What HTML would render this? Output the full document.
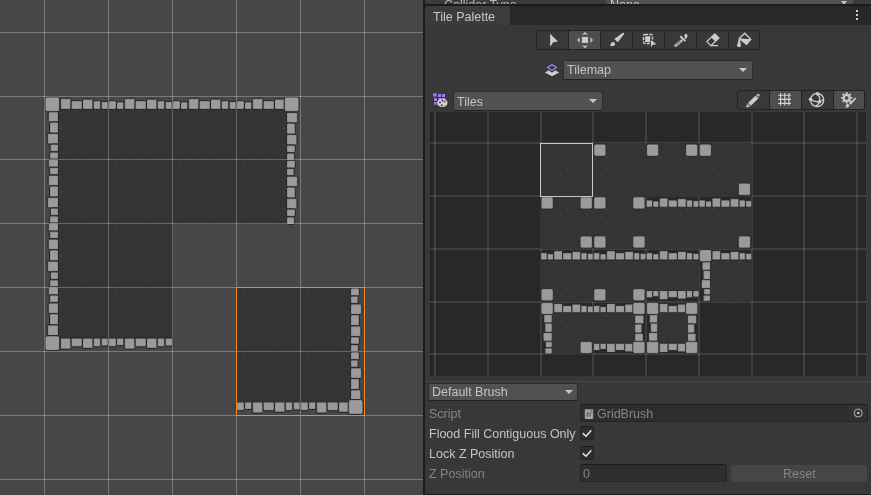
<!DOCTYPE html>
<html><head><meta charset="utf-8">
<style>
*{box-sizing:border-box;margin:0;padding:0}
html,body{-webkit-font-smoothing:antialiased;width:871px;height:495px;overflow:hidden;background:#383838;font-family:"Liberation Sans",sans-serif;font-size:12.5px;color:#c4c4c4}
.a{position:absolute}
.t{position:absolute;white-space:nowrap;line-height:14px;will-change:transform}
.dd{position:absolute;background:#515151;border:1px solid #2e2e2e;border-bottom-color:#222;border-radius:3px}
.dd .arr{position:absolute;width:0;height:0;border-left:4px solid transparent;border-right:4px solid transparent;border-top:4.5px solid #c8c8c8}
.grp{position:absolute;background:#232323;border-radius:3px}
.btn{position:absolute;background:#393939}
.btn.on{background:#4e4e4e}
.fld{position:absolute;background:#2e2e2e;border:1px solid #242424;border-top-color:#1c1c1c;border-radius:3px}
.dis{color:#858585}
.pl{mix-blend-mode:screen}
.sg{fill:#454545}
.pg{fill:#1b1b1b}
@supports (mix-blend-mode:plus-lighter){.pl{mix-blend-mode:plus-lighter}.sg{fill:#323232}.pg{fill:#171717}}
</style></head><body>
<!-- scene -->
<div class="a" style="left:0;top:0;width:423px;height:495px;background:#474747;overflow:hidden">
<svg width="423" height="495" style="position:absolute;left:0;top:0">
<g><g transform="translate(44.000,96.000) scale(1.00000,0.99781)" shape-rendering="crispEdges"><rect x="11.5" y="11.5" width="53.0" height="53.0" fill="#343434"/><g shape-rendering="auto" stroke="#434343" stroke-width="0.9"><path d="M15.40 16.80h2.4M16.60 15.60v2.4"/><path d="M31.80 15.30h2.4M33.00 14.10v2.4"/><path d="M49.50 16.30h2.4M50.70 15.10v2.4"/><path d="M23.80 23.40h2.4M25.00 22.20v2.4"/><path d="M40.80 23.00h2.4M42.00 21.80v2.4"/><path d="M55.80 22.90h2.4M57.00 21.70v2.4"/><path d="M15.80 32.30h2.4M17.00 31.10v2.4"/><path d="M31.80 31.30h2.4M33.00 30.10v2.4"/><path d="M46.70 32.30h2.4M47.90 31.10v2.4"/><path d="M23.40 38.30h2.4M24.60 37.10v2.4"/><path d="M39.50 40.40h2.4M40.70 39.20v2.4"/><path d="M56.40 38.30h2.4M57.60 37.10v2.4"/><path d="M13.70 48.30h2.4M14.90 47.10v2.4"/><path d="M29.50 47.90h2.4M30.70 46.70v2.4"/><path d="M46.90 49.20h2.4M48.10 48.00v2.4"/><path d="M23.40 55.90h2.4M24.60 54.70v2.4"/><path d="M39.50 57.30h2.4M40.70 56.10v2.4"/><path d="M56.60 55.40h2.4M57.80 54.20v2.4"/></g></g><g transform="translate(108.000,96.000) scale(1.00000,0.99781)" shape-rendering="crispEdges"><rect x="-0.5" y="11.5" width="65.0" height="53.0" fill="#343434"/><g shape-rendering="auto" stroke="#434343" stroke-width="0.9"><path d="M15.40 16.80h2.4M16.60 15.60v2.4"/><path d="M31.80 15.30h2.4M33.00 14.10v2.4"/><path d="M49.50 16.30h2.4M50.70 15.10v2.4"/><path d="M8.50 24.20h2.4M9.70 23.00v2.4"/><path d="M23.80 23.40h2.4M25.00 22.20v2.4"/><path d="M40.80 23.00h2.4M42.00 21.80v2.4"/><path d="M55.80 22.90h2.4M57.00 21.70v2.4"/><path d="M15.80 32.30h2.4M17.00 31.10v2.4"/><path d="M31.80 31.30h2.4M33.00 30.10v2.4"/><path d="M46.70 32.30h2.4M47.90 31.10v2.4"/><path d="M7.50 38.80h2.4M8.70 37.60v2.4"/><path d="M23.40 38.30h2.4M24.60 37.10v2.4"/><path d="M39.50 40.40h2.4M40.70 39.20v2.4"/><path d="M56.40 38.30h2.4M57.60 37.10v2.4"/><path d="M13.70 48.30h2.4M14.90 47.10v2.4"/><path d="M29.50 47.90h2.4M30.70 46.70v2.4"/><path d="M46.90 49.20h2.4M48.10 48.00v2.4"/><path d="M7.80 57.30h2.4M9.00 56.10v2.4"/><path d="M23.40 55.90h2.4M24.60 54.70v2.4"/><path d="M39.50 57.30h2.4M40.70 56.10v2.4"/><path d="M56.60 55.40h2.4M57.80 54.20v2.4"/></g></g><g transform="translate(172.000,96.000) scale(1.00000,0.99781)" shape-rendering="crispEdges"><rect x="-0.5" y="11.5" width="65.0" height="53.0" fill="#343434"/><g shape-rendering="auto" stroke="#434343" stroke-width="0.9"><path d="M15.40 16.80h2.4M16.60 15.60v2.4"/><path d="M31.80 15.30h2.4M33.00 14.10v2.4"/><path d="M49.50 16.30h2.4M50.70 15.10v2.4"/><path d="M8.50 24.20h2.4M9.70 23.00v2.4"/><path d="M23.80 23.40h2.4M25.00 22.20v2.4"/><path d="M40.80 23.00h2.4M42.00 21.80v2.4"/><path d="M55.80 22.90h2.4M57.00 21.70v2.4"/><path d="M15.80 32.30h2.4M17.00 31.10v2.4"/><path d="M31.80 31.30h2.4M33.00 30.10v2.4"/><path d="M46.70 32.30h2.4M47.90 31.10v2.4"/><path d="M7.50 38.80h2.4M8.70 37.60v2.4"/><path d="M23.40 38.30h2.4M24.60 37.10v2.4"/><path d="M39.50 40.40h2.4M40.70 39.20v2.4"/><path d="M56.40 38.30h2.4M57.60 37.10v2.4"/><path d="M13.70 48.30h2.4M14.90 47.10v2.4"/><path d="M29.50 47.90h2.4M30.70 46.70v2.4"/><path d="M46.90 49.20h2.4M48.10 48.00v2.4"/><path d="M7.80 57.30h2.4M9.00 56.10v2.4"/><path d="M23.40 55.90h2.4M24.60 54.70v2.4"/><path d="M39.50 57.30h2.4M40.70 56.10v2.4"/><path d="M56.60 55.40h2.4M57.80 54.20v2.4"/></g></g><g transform="translate(236.000,96.000) scale(1.00000,0.99781)" shape-rendering="crispEdges"><rect x="-0.5" y="11.5" width="53.0" height="53.0" fill="#343434"/><g shape-rendering="auto" stroke="#434343" stroke-width="0.9"><path d="M15.40 16.80h2.4M16.60 15.60v2.4"/><path d="M31.80 15.30h2.4M33.00 14.10v2.4"/><path d="M8.50 24.20h2.4M9.70 23.00v2.4"/><path d="M23.80 23.40h2.4M25.00 22.20v2.4"/><path d="M40.80 23.00h2.4M42.00 21.80v2.4"/><path d="M15.80 32.30h2.4M17.00 31.10v2.4"/><path d="M31.80 31.30h2.4M33.00 30.10v2.4"/><path d="M46.70 32.30h2.4M47.90 31.10v2.4"/><path d="M7.50 38.80h2.4M8.70 37.60v2.4"/><path d="M23.40 38.30h2.4M24.60 37.10v2.4"/><path d="M39.50 40.40h2.4M40.70 39.20v2.4"/><path d="M13.70 48.30h2.4M14.90 47.10v2.4"/><path d="M29.50 47.90h2.4M30.70 46.70v2.4"/><path d="M46.90 49.20h2.4M48.10 48.00v2.4"/><path d="M7.80 57.30h2.4M9.00 56.10v2.4"/><path d="M23.40 55.90h2.4M24.60 54.70v2.4"/><path d="M39.50 57.30h2.4M40.70 56.10v2.4"/></g></g><g transform="translate(44.000,159.860) scale(1.00000,0.99781)" shape-rendering="crispEdges"><rect x="11.5" y="-0.5" width="53.0" height="65.0" fill="#343434"/><g shape-rendering="auto" stroke="#434343" stroke-width="0.9"><path d="M22.80 8.40h2.4M24.00 7.20v2.4"/><path d="M39.50 7.80h2.4M40.70 6.60v2.4"/><path d="M55.80 6.70h2.4M57.00 5.50v2.4"/><path d="M15.40 16.80h2.4M16.60 15.60v2.4"/><path d="M31.80 15.30h2.4M33.00 14.10v2.4"/><path d="M49.50 16.30h2.4M50.70 15.10v2.4"/><path d="M23.80 23.40h2.4M25.00 22.20v2.4"/><path d="M40.80 23.00h2.4M42.00 21.80v2.4"/><path d="M55.80 22.90h2.4M57.00 21.70v2.4"/><path d="M15.80 32.30h2.4M17.00 31.10v2.4"/><path d="M31.80 31.30h2.4M33.00 30.10v2.4"/><path d="M46.70 32.30h2.4M47.90 31.10v2.4"/><path d="M23.40 38.30h2.4M24.60 37.10v2.4"/><path d="M39.50 40.40h2.4M40.70 39.20v2.4"/><path d="M56.40 38.30h2.4M57.60 37.10v2.4"/><path d="M13.70 48.30h2.4M14.90 47.10v2.4"/><path d="M29.50 47.90h2.4M30.70 46.70v2.4"/><path d="M46.90 49.20h2.4M48.10 48.00v2.4"/><path d="M23.40 55.90h2.4M24.60 54.70v2.4"/><path d="M39.50 57.30h2.4M40.70 56.10v2.4"/><path d="M56.60 55.40h2.4M57.80 54.20v2.4"/></g></g><g transform="translate(108.000,159.860) scale(1.00000,0.99781)" shape-rendering="crispEdges"><rect x="-0.5" y="-0.5" width="65.0" height="65.0" fill="#343434"/><g shape-rendering="auto" stroke="#434343" stroke-width="0.9"><path d="M6.80 6.70h2.4M8.00 5.50v2.4"/><path d="M22.80 8.40h2.4M24.00 7.20v2.4"/><path d="M39.50 7.80h2.4M40.70 6.60v2.4"/><path d="M55.80 6.70h2.4M57.00 5.50v2.4"/><path d="M15.40 16.80h2.4M16.60 15.60v2.4"/><path d="M31.80 15.30h2.4M33.00 14.10v2.4"/><path d="M49.50 16.30h2.4M50.70 15.10v2.4"/><path d="M8.50 24.20h2.4M9.70 23.00v2.4"/><path d="M23.80 23.40h2.4M25.00 22.20v2.4"/><path d="M40.80 23.00h2.4M42.00 21.80v2.4"/><path d="M55.80 22.90h2.4M57.00 21.70v2.4"/><path d="M15.80 32.30h2.4M17.00 31.10v2.4"/><path d="M31.80 31.30h2.4M33.00 30.10v2.4"/><path d="M46.70 32.30h2.4M47.90 31.10v2.4"/><path d="M7.50 38.80h2.4M8.70 37.60v2.4"/><path d="M23.40 38.30h2.4M24.60 37.10v2.4"/><path d="M39.50 40.40h2.4M40.70 39.20v2.4"/><path d="M56.40 38.30h2.4M57.60 37.10v2.4"/><path d="M13.70 48.30h2.4M14.90 47.10v2.4"/><path d="M29.50 47.90h2.4M30.70 46.70v2.4"/><path d="M46.90 49.20h2.4M48.10 48.00v2.4"/><path d="M7.80 57.30h2.4M9.00 56.10v2.4"/><path d="M23.40 55.90h2.4M24.60 54.70v2.4"/><path d="M39.50 57.30h2.4M40.70 56.10v2.4"/><path d="M56.60 55.40h2.4M57.80 54.20v2.4"/></g></g><g transform="translate(172.000,159.860) scale(1.00000,0.99781)" shape-rendering="crispEdges"><rect x="-0.5" y="-0.5" width="65.0" height="65.0" fill="#343434"/><g shape-rendering="auto" stroke="#434343" stroke-width="0.9"><path d="M6.80 6.70h2.4M8.00 5.50v2.4"/><path d="M22.80 8.40h2.4M24.00 7.20v2.4"/><path d="M39.50 7.80h2.4M40.70 6.60v2.4"/><path d="M55.80 6.70h2.4M57.00 5.50v2.4"/><path d="M15.40 16.80h2.4M16.60 15.60v2.4"/><path d="M31.80 15.30h2.4M33.00 14.10v2.4"/><path d="M49.50 16.30h2.4M50.70 15.10v2.4"/><path d="M8.50 24.20h2.4M9.70 23.00v2.4"/><path d="M23.80 23.40h2.4M25.00 22.20v2.4"/><path d="M40.80 23.00h2.4M42.00 21.80v2.4"/><path d="M55.80 22.90h2.4M57.00 21.70v2.4"/><path d="M15.80 32.30h2.4M17.00 31.10v2.4"/><path d="M31.80 31.30h2.4M33.00 30.10v2.4"/><path d="M46.70 32.30h2.4M47.90 31.10v2.4"/><path d="M7.50 38.80h2.4M8.70 37.60v2.4"/><path d="M23.40 38.30h2.4M24.60 37.10v2.4"/><path d="M39.50 40.40h2.4M40.70 39.20v2.4"/><path d="M56.40 38.30h2.4M57.60 37.10v2.4"/><path d="M13.70 48.30h2.4M14.90 47.10v2.4"/><path d="M29.50 47.90h2.4M30.70 46.70v2.4"/><path d="M46.90 49.20h2.4M48.10 48.00v2.4"/><path d="M7.80 57.30h2.4M9.00 56.10v2.4"/><path d="M23.40 55.90h2.4M24.60 54.70v2.4"/><path d="M39.50 57.30h2.4M40.70 56.10v2.4"/><path d="M56.60 55.40h2.4M57.80 54.20v2.4"/></g></g><g transform="translate(236.000,159.860) scale(1.00000,0.99781)" shape-rendering="crispEdges"><rect x="-0.5" y="-0.5" width="53.0" height="65.0" fill="#343434"/><g shape-rendering="auto" stroke="#434343" stroke-width="0.9"><path d="M6.80 6.70h2.4M8.00 5.50v2.4"/><path d="M22.80 8.40h2.4M24.00 7.20v2.4"/><path d="M39.50 7.80h2.4M40.70 6.60v2.4"/><path d="M15.40 16.80h2.4M16.60 15.60v2.4"/><path d="M31.80 15.30h2.4M33.00 14.10v2.4"/><path d="M8.50 24.20h2.4M9.70 23.00v2.4"/><path d="M23.80 23.40h2.4M25.00 22.20v2.4"/><path d="M40.80 23.00h2.4M42.00 21.80v2.4"/><path d="M15.80 32.30h2.4M17.00 31.10v2.4"/><path d="M31.80 31.30h2.4M33.00 30.10v2.4"/><path d="M46.70 32.30h2.4M47.90 31.10v2.4"/><path d="M7.50 38.80h2.4M8.70 37.60v2.4"/><path d="M23.40 38.30h2.4M24.60 37.10v2.4"/><path d="M39.50 40.40h2.4M40.70 39.20v2.4"/><path d="M13.70 48.30h2.4M14.90 47.10v2.4"/><path d="M29.50 47.90h2.4M30.70 46.70v2.4"/><path d="M46.90 49.20h2.4M48.10 48.00v2.4"/><path d="M7.80 57.30h2.4M9.00 56.10v2.4"/><path d="M23.40 55.90h2.4M24.60 54.70v2.4"/><path d="M39.50 57.30h2.4M40.70 56.10v2.4"/></g></g><g transform="translate(44.000,223.720) scale(1.00000,0.99781)" shape-rendering="crispEdges"><rect x="11.5" y="-0.5" width="53.0" height="65.0" fill="#343434"/><g shape-rendering="auto" stroke="#434343" stroke-width="0.9"><path d="M22.80 8.40h2.4M24.00 7.20v2.4"/><path d="M39.50 7.80h2.4M40.70 6.60v2.4"/><path d="M55.80 6.70h2.4M57.00 5.50v2.4"/><path d="M15.40 16.80h2.4M16.60 15.60v2.4"/><path d="M31.80 15.30h2.4M33.00 14.10v2.4"/><path d="M49.50 16.30h2.4M50.70 15.10v2.4"/><path d="M23.80 23.40h2.4M25.00 22.20v2.4"/><path d="M40.80 23.00h2.4M42.00 21.80v2.4"/><path d="M55.80 22.90h2.4M57.00 21.70v2.4"/><path d="M15.80 32.30h2.4M17.00 31.10v2.4"/><path d="M31.80 31.30h2.4M33.00 30.10v2.4"/><path d="M46.70 32.30h2.4M47.90 31.10v2.4"/><path d="M23.40 38.30h2.4M24.60 37.10v2.4"/><path d="M39.50 40.40h2.4M40.70 39.20v2.4"/><path d="M56.40 38.30h2.4M57.60 37.10v2.4"/><path d="M13.70 48.30h2.4M14.90 47.10v2.4"/><path d="M29.50 47.90h2.4M30.70 46.70v2.4"/><path d="M46.90 49.20h2.4M48.10 48.00v2.4"/><path d="M23.40 55.90h2.4M24.60 54.70v2.4"/><path d="M39.50 57.30h2.4M40.70 56.10v2.4"/><path d="M56.60 55.40h2.4M57.80 54.20v2.4"/></g></g><g transform="translate(108.000,223.720) scale(1.00000,0.99781)" shape-rendering="crispEdges"><rect x="-0.5" y="-0.5" width="65.0" height="65.0" fill="#343434"/><g shape-rendering="auto" stroke="#434343" stroke-width="0.9"><path d="M6.80 6.70h2.4M8.00 5.50v2.4"/><path d="M22.80 8.40h2.4M24.00 7.20v2.4"/><path d="M39.50 7.80h2.4M40.70 6.60v2.4"/><path d="M55.80 6.70h2.4M57.00 5.50v2.4"/><path d="M15.40 16.80h2.4M16.60 15.60v2.4"/><path d="M31.80 15.30h2.4M33.00 14.10v2.4"/><path d="M49.50 16.30h2.4M50.70 15.10v2.4"/><path d="M8.50 24.20h2.4M9.70 23.00v2.4"/><path d="M23.80 23.40h2.4M25.00 22.20v2.4"/><path d="M40.80 23.00h2.4M42.00 21.80v2.4"/><path d="M55.80 22.90h2.4M57.00 21.70v2.4"/><path d="M15.80 32.30h2.4M17.00 31.10v2.4"/><path d="M31.80 31.30h2.4M33.00 30.10v2.4"/><path d="M46.70 32.30h2.4M47.90 31.10v2.4"/><path d="M7.50 38.80h2.4M8.70 37.60v2.4"/><path d="M23.40 38.30h2.4M24.60 37.10v2.4"/><path d="M39.50 40.40h2.4M40.70 39.20v2.4"/><path d="M56.40 38.30h2.4M57.60 37.10v2.4"/><path d="M13.70 48.30h2.4M14.90 47.10v2.4"/><path d="M29.50 47.90h2.4M30.70 46.70v2.4"/><path d="M46.90 49.20h2.4M48.10 48.00v2.4"/><path d="M7.80 57.30h2.4M9.00 56.10v2.4"/><path d="M23.40 55.90h2.4M24.60 54.70v2.4"/><path d="M39.50 57.30h2.4M40.70 56.10v2.4"/><path d="M56.60 55.40h2.4M57.80 54.20v2.4"/></g></g><g transform="translate(44.000,287.580) scale(1.00000,0.99781)" shape-rendering="crispEdges"><rect x="11.5" y="-0.5" width="53.0" height="53.0" fill="#343434"/><g shape-rendering="auto" stroke="#434343" stroke-width="0.9"><path d="M22.80 8.40h2.4M24.00 7.20v2.4"/><path d="M39.50 7.80h2.4M40.70 6.60v2.4"/><path d="M55.80 6.70h2.4M57.00 5.50v2.4"/><path d="M15.40 16.80h2.4M16.60 15.60v2.4"/><path d="M31.80 15.30h2.4M33.00 14.10v2.4"/><path d="M49.50 16.30h2.4M50.70 15.10v2.4"/><path d="M23.80 23.40h2.4M25.00 22.20v2.4"/><path d="M40.80 23.00h2.4M42.00 21.80v2.4"/><path d="M55.80 22.90h2.4M57.00 21.70v2.4"/><path d="M15.80 32.30h2.4M17.00 31.10v2.4"/><path d="M31.80 31.30h2.4M33.00 30.10v2.4"/><path d="M46.70 32.30h2.4M47.90 31.10v2.4"/><path d="M23.40 38.30h2.4M24.60 37.10v2.4"/><path d="M39.50 40.40h2.4M40.70 39.20v2.4"/><path d="M56.40 38.30h2.4M57.60 37.10v2.4"/><path d="M13.70 48.30h2.4M14.90 47.10v2.4"/><path d="M29.50 47.90h2.4M30.70 46.70v2.4"/><path d="M46.90 49.20h2.4M48.10 48.00v2.4"/></g></g><g transform="translate(108.000,287.580) scale(1.00000,0.99781)" shape-rendering="crispEdges"><rect x="-0.5" y="-0.5" width="65.0" height="53.0" fill="#343434"/><g shape-rendering="auto" stroke="#434343" stroke-width="0.9"><path d="M6.80 6.70h2.4M8.00 5.50v2.4"/><path d="M22.80 8.40h2.4M24.00 7.20v2.4"/><path d="M39.50 7.80h2.4M40.70 6.60v2.4"/><path d="M55.80 6.70h2.4M57.00 5.50v2.4"/><path d="M15.40 16.80h2.4M16.60 15.60v2.4"/><path d="M31.80 15.30h2.4M33.00 14.10v2.4"/><path d="M49.50 16.30h2.4M50.70 15.10v2.4"/><path d="M8.50 24.20h2.4M9.70 23.00v2.4"/><path d="M23.80 23.40h2.4M25.00 22.20v2.4"/><path d="M40.80 23.00h2.4M42.00 21.80v2.4"/><path d="M55.80 22.90h2.4M57.00 21.70v2.4"/><path d="M15.80 32.30h2.4M17.00 31.10v2.4"/><path d="M31.80 31.30h2.4M33.00 30.10v2.4"/><path d="M46.70 32.30h2.4M47.90 31.10v2.4"/><path d="M7.50 38.80h2.4M8.70 37.60v2.4"/><path d="M23.40 38.30h2.4M24.60 37.10v2.4"/><path d="M39.50 40.40h2.4M40.70 39.20v2.4"/><path d="M56.40 38.30h2.4M57.60 37.10v2.4"/><path d="M13.70 48.30h2.4M14.90 47.10v2.4"/><path d="M29.50 47.90h2.4M30.70 46.70v2.4"/><path d="M46.90 49.20h2.4M48.10 48.00v2.4"/></g></g><g transform="translate(236.000,287.580) scale(1.00000,0.99781)" shape-rendering="crispEdges"><rect x="-0.5" y="-0.5" width="65.0" height="65.0" fill="#343434"/><g shape-rendering="auto" stroke="#434343" stroke-width="0.9"><path d="M6.80 6.70h2.4M8.00 5.50v2.4"/><path d="M22.80 8.40h2.4M24.00 7.20v2.4"/><path d="M39.50 7.80h2.4M40.70 6.60v2.4"/><path d="M55.80 6.70h2.4M57.00 5.50v2.4"/><path d="M15.40 16.80h2.4M16.60 15.60v2.4"/><path d="M31.80 15.30h2.4M33.00 14.10v2.4"/><path d="M49.50 16.30h2.4M50.70 15.10v2.4"/><path d="M8.50 24.20h2.4M9.70 23.00v2.4"/><path d="M23.80 23.40h2.4M25.00 22.20v2.4"/><path d="M40.80 23.00h2.4M42.00 21.80v2.4"/><path d="M55.80 22.90h2.4M57.00 21.70v2.4"/><path d="M15.80 32.30h2.4M17.00 31.10v2.4"/><path d="M31.80 31.30h2.4M33.00 30.10v2.4"/><path d="M46.70 32.30h2.4M47.90 31.10v2.4"/><path d="M7.50 38.80h2.4M8.70 37.60v2.4"/><path d="M23.40 38.30h2.4M24.60 37.10v2.4"/><path d="M39.50 40.40h2.4M40.70 39.20v2.4"/><path d="M56.40 38.30h2.4M57.60 37.10v2.4"/><path d="M13.70 48.30h2.4M14.90 47.10v2.4"/><path d="M29.50 47.90h2.4M30.70 46.70v2.4"/><path d="M46.90 49.20h2.4M48.10 48.00v2.4"/><path d="M7.80 57.30h2.4M9.00 56.10v2.4"/><path d="M23.40 55.90h2.4M24.60 54.70v2.4"/><path d="M39.50 57.30h2.4M40.70 56.10v2.4"/><path d="M56.60 55.40h2.4M57.80 54.20v2.4"/></g></g><g transform="translate(300.000,287.580) scale(1.00000,0.99781)" shape-rendering="crispEdges"><rect x="-0.5" y="-0.5" width="53.0" height="65.0" fill="#343434"/><g shape-rendering="auto" stroke="#434343" stroke-width="0.9"><path d="M6.80 6.70h2.4M8.00 5.50v2.4"/><path d="M22.80 8.40h2.4M24.00 7.20v2.4"/><path d="M39.50 7.80h2.4M40.70 6.60v2.4"/><path d="M15.40 16.80h2.4M16.60 15.60v2.4"/><path d="M31.80 15.30h2.4M33.00 14.10v2.4"/><path d="M8.50 24.20h2.4M9.70 23.00v2.4"/><path d="M23.80 23.40h2.4M25.00 22.20v2.4"/><path d="M40.80 23.00h2.4M42.00 21.80v2.4"/><path d="M15.80 32.30h2.4M17.00 31.10v2.4"/><path d="M31.80 31.30h2.4M33.00 30.10v2.4"/><path d="M46.70 32.30h2.4M47.90 31.10v2.4"/><path d="M7.50 38.80h2.4M8.70 37.60v2.4"/><path d="M23.40 38.30h2.4M24.60 37.10v2.4"/><path d="M39.50 40.40h2.4M40.70 39.20v2.4"/><path d="M13.70 48.30h2.4M14.90 47.10v2.4"/><path d="M29.50 47.90h2.4M30.70 46.70v2.4"/><path d="M46.90 49.20h2.4M48.10 48.00v2.4"/><path d="M7.80 57.30h2.4M9.00 56.10v2.4"/><path d="M23.40 55.90h2.4M24.60 54.70v2.4"/><path d="M39.50 57.30h2.4M40.70 56.10v2.4"/></g></g><g transform="translate(236.000,351.440) scale(1.00000,0.99781)" shape-rendering="crispEdges"><rect x="-0.5" y="-0.5" width="65.0" height="53.0" fill="#343434"/><g shape-rendering="auto" stroke="#434343" stroke-width="0.9"><path d="M6.80 6.70h2.4M8.00 5.50v2.4"/><path d="M22.80 8.40h2.4M24.00 7.20v2.4"/><path d="M39.50 7.80h2.4M40.70 6.60v2.4"/><path d="M55.80 6.70h2.4M57.00 5.50v2.4"/><path d="M15.40 16.80h2.4M16.60 15.60v2.4"/><path d="M31.80 15.30h2.4M33.00 14.10v2.4"/><path d="M49.50 16.30h2.4M50.70 15.10v2.4"/><path d="M8.50 24.20h2.4M9.70 23.00v2.4"/><path d="M23.80 23.40h2.4M25.00 22.20v2.4"/><path d="M40.80 23.00h2.4M42.00 21.80v2.4"/><path d="M55.80 22.90h2.4M57.00 21.70v2.4"/><path d="M15.80 32.30h2.4M17.00 31.10v2.4"/><path d="M31.80 31.30h2.4M33.00 30.10v2.4"/><path d="M46.70 32.30h2.4M47.90 31.10v2.4"/><path d="M7.50 38.80h2.4M8.70 37.60v2.4"/><path d="M23.40 38.30h2.4M24.60 37.10v2.4"/><path d="M39.50 40.40h2.4M40.70 39.20v2.4"/><path d="M56.40 38.30h2.4M57.60 37.10v2.4"/><path d="M13.70 48.30h2.4M14.90 47.10v2.4"/><path d="M29.50 47.90h2.4M30.70 46.70v2.4"/><path d="M46.90 49.20h2.4M48.10 48.00v2.4"/></g></g><g transform="translate(300.000,351.440) scale(1.00000,0.99781)" shape-rendering="crispEdges"><rect x="-0.5" y="-0.5" width="53.0" height="53.0" fill="#343434"/><g shape-rendering="auto" stroke="#434343" stroke-width="0.9"><path d="M6.80 6.70h2.4M8.00 5.50v2.4"/><path d="M22.80 8.40h2.4M24.00 7.20v2.4"/><path d="M39.50 7.80h2.4M40.70 6.60v2.4"/><path d="M15.40 16.80h2.4M16.60 15.60v2.4"/><path d="M31.80 15.30h2.4M33.00 14.10v2.4"/><path d="M8.50 24.20h2.4M9.70 23.00v2.4"/><path d="M23.80 23.40h2.4M25.00 22.20v2.4"/><path d="M40.80 23.00h2.4M42.00 21.80v2.4"/><path d="M15.80 32.30h2.4M17.00 31.10v2.4"/><path d="M31.80 31.30h2.4M33.00 30.10v2.4"/><path d="M46.70 32.30h2.4M47.90 31.10v2.4"/><path d="M7.50 38.80h2.4M8.70 37.60v2.4"/><path d="M23.40 38.30h2.4M24.60 37.10v2.4"/><path d="M39.50 40.40h2.4M40.70 39.20v2.4"/><path d="M13.70 48.30h2.4M14.90 47.10v2.4"/><path d="M29.50 47.90h2.4M30.70 46.70v2.4"/><path d="M46.90 49.20h2.4M48.10 48.00v2.4"/></g></g></g>
<g fill="#9a9a9a" stroke="#262626" stroke-width="1"><g transform="translate(44.000,96.000) scale(1.00000,0.99781)" fill="#8c8c8c" stroke="#252525"><rect x="16.30" y="2.20" width="10.80" height="11.30" rx="1.6" /><rect x="17.60" y="3.50" width="8.20" height="8.70" rx="0.6000000000000001" fill="#9b9b9b" stroke="none"/><rect x="27.10" y="4.60" width="11.30" height="8.90" rx="1.6" /><rect x="28.40" y="5.90" width="8.70" height="6.30" rx="0.6000000000000001" fill="#9b9b9b" stroke="none"/><rect x="38.40" y="3.00" width="10.80" height="10.50" rx="1.6" /><rect x="39.70" y="4.30" width="8.20" height="7.90" rx="0.6000000000000001" fill="#9b9b9b" stroke="none"/><rect x="49.20" y="4.60" width="7.70" height="8.90" rx="1.6" /><rect x="50.50" y="5.90" width="5.10" height="6.30" rx="0.6000000000000001" fill="#9b9b9b" stroke="none"/><rect x="57.10" y="5.40" width="7.60" height="8.10" rx="1.6" /><rect x="58.40" y="6.70" width="5.00" height="5.50" rx="0.6000000000000001" fill="#9b9b9b" stroke="none"/><rect x="4.20" y="15.30" width="10.30" height="10.80" rx="1.6" /><rect x="5.50" y="16.60" width="7.70" height="8.20" rx="0.6000000000000001" fill="#9b9b9b" stroke="none"/><rect x="5.50" y="26.10" width="9.00" height="11.30" rx="1.6" /><rect x="6.80" y="27.40" width="6.40" height="8.70" rx="0.6000000000000001" fill="#9b9b9b" stroke="none"/><rect x="3.30" y="37.40" width="11.20" height="10.80" rx="1.6" /><rect x="4.60" y="38.70" width="8.60" height="8.20" rx="0.6000000000000001" fill="#9b9b9b" stroke="none"/><rect x="6.20" y="48.20" width="8.30" height="7.70" rx="1.6" /><rect x="7.50" y="49.50" width="5.70" height="5.10" rx="0.6000000000000001" fill="#9b9b9b" stroke="none"/><rect x="5.50" y="56.10" width="9.00" height="7.60" rx="1.6" /><rect x="6.80" y="57.40" width="6.40" height="5.00" rx="0.6000000000000001" fill="#9b9b9b" stroke="none"/><rect x="0.80" y="0.80" width="15.00" height="15.00" rx="2.5" /><rect x="2.10" y="2.10" width="12.40" height="12.40" rx="1.5" fill="#9b9b9b" stroke="none"/></g><g transform="translate(108.000,96.000) scale(1.00000,0.99781)" fill="#8c8c8c" stroke="#252525"><rect x="0.30" y="4.60" width="8.20" height="8.90" rx="1.6" /><rect x="1.60" y="5.90" width="5.60" height="6.30" rx="0.6000000000000001" fill="#9b9b9b" stroke="none"/><rect x="8.40" y="5.80" width="7.60" height="7.70" rx="1.6" /><rect x="9.70" y="7.10" width="5.00" height="5.10" rx="0.6000000000000001" fill="#9b9b9b" stroke="none"/><rect x="16.30" y="2.20" width="10.80" height="11.30" rx="1.6" /><rect x="17.60" y="3.50" width="8.20" height="8.70" rx="0.6000000000000001" fill="#9b9b9b" stroke="none"/><rect x="27.10" y="4.60" width="11.30" height="8.90" rx="1.6" /><rect x="28.40" y="5.90" width="8.70" height="6.30" rx="0.6000000000000001" fill="#9b9b9b" stroke="none"/><rect x="38.40" y="3.00" width="10.80" height="10.50" rx="1.6" /><rect x="39.70" y="4.30" width="8.20" height="7.90" rx="0.6000000000000001" fill="#9b9b9b" stroke="none"/><rect x="49.20" y="4.60" width="7.70" height="8.90" rx="1.6" /><rect x="50.50" y="5.90" width="5.10" height="6.30" rx="0.6000000000000001" fill="#9b9b9b" stroke="none"/><rect x="57.10" y="5.40" width="7.60" height="8.10" rx="1.6" /><rect x="58.40" y="6.70" width="5.00" height="5.50" rx="0.6000000000000001" fill="#9b9b9b" stroke="none"/></g><g transform="translate(172.000,96.000) scale(1.00000,0.99781)" fill="#8c8c8c" stroke="#252525"><rect x="0.30" y="4.60" width="8.20" height="8.90" rx="1.6" /><rect x="1.60" y="5.90" width="5.60" height="6.30" rx="0.6000000000000001" fill="#9b9b9b" stroke="none"/><rect x="8.40" y="5.80" width="7.60" height="7.70" rx="1.6" /><rect x="9.70" y="7.10" width="5.00" height="5.10" rx="0.6000000000000001" fill="#9b9b9b" stroke="none"/><rect x="16.30" y="2.20" width="10.80" height="11.30" rx="1.6" /><rect x="17.60" y="3.50" width="8.20" height="8.70" rx="0.6000000000000001" fill="#9b9b9b" stroke="none"/><rect x="27.10" y="4.60" width="11.30" height="8.90" rx="1.6" /><rect x="28.40" y="5.90" width="8.70" height="6.30" rx="0.6000000000000001" fill="#9b9b9b" stroke="none"/><rect x="38.40" y="3.00" width="10.80" height="10.50" rx="1.6" /><rect x="39.70" y="4.30" width="8.20" height="7.90" rx="0.6000000000000001" fill="#9b9b9b" stroke="none"/><rect x="49.20" y="4.60" width="7.70" height="8.90" rx="1.6" /><rect x="50.50" y="5.90" width="5.10" height="6.30" rx="0.6000000000000001" fill="#9b9b9b" stroke="none"/><rect x="57.10" y="5.40" width="7.60" height="8.10" rx="1.6" /><rect x="58.40" y="6.70" width="5.00" height="5.50" rx="0.6000000000000001" fill="#9b9b9b" stroke="none"/></g><g transform="translate(236.000,96.000) scale(1.00000,0.99781)" fill="#8c8c8c" stroke="#252525"><rect x="0.30" y="4.60" width="8.20" height="8.90" rx="1.6" /><rect x="1.60" y="5.90" width="5.60" height="6.30" rx="0.6000000000000001" fill="#9b9b9b" stroke="none"/><rect x="8.40" y="5.80" width="7.60" height="7.70" rx="1.6" /><rect x="9.70" y="7.10" width="5.00" height="5.10" rx="0.6000000000000001" fill="#9b9b9b" stroke="none"/><rect x="16.30" y="2.20" width="10.80" height="11.30" rx="1.6" /><rect x="17.60" y="3.50" width="8.20" height="8.70" rx="0.6000000000000001" fill="#9b9b9b" stroke="none"/><rect x="27.10" y="4.60" width="11.30" height="8.90" rx="1.6" /><rect x="28.40" y="5.90" width="8.70" height="6.30" rx="0.6000000000000001" fill="#9b9b9b" stroke="none"/><rect x="38.40" y="3.00" width="10.80" height="10.50" rx="1.6" /><rect x="39.70" y="4.30" width="8.20" height="7.90" rx="0.6000000000000001" fill="#9b9b9b" stroke="none"/><rect x="50.50" y="16.30" width="11.30" height="10.80" rx="1.6" /><rect x="51.80" y="17.60" width="8.70" height="8.20" rx="0.6000000000000001" fill="#9b9b9b" stroke="none"/><rect x="50.50" y="27.10" width="8.90" height="11.30" rx="1.6" /><rect x="51.80" y="28.40" width="6.30" height="8.70" rx="0.6000000000000001" fill="#9b9b9b" stroke="none"/><rect x="50.50" y="38.40" width="10.50" height="10.80" rx="1.6" /><rect x="51.80" y="39.70" width="7.90" height="8.20" rx="0.6000000000000001" fill="#9b9b9b" stroke="none"/><rect x="50.50" y="49.20" width="8.90" height="7.70" rx="1.6" /><rect x="51.80" y="50.50" width="6.30" height="5.10" rx="0.6000000000000001" fill="#9b9b9b" stroke="none"/><rect x="50.50" y="57.10" width="8.10" height="7.60" rx="1.6" /><rect x="51.80" y="58.40" width="5.50" height="5.00" rx="0.6000000000000001" fill="#9b9b9b" stroke="none"/><rect x="48.20" y="0.80" width="15.00" height="15.00" rx="2.5" /><rect x="49.50" y="2.10" width="12.40" height="12.40" rx="1.5" fill="#9b9b9b" stroke="none"/></g><g transform="translate(44.000,159.860) scale(1.00000,0.99781)" fill="#8c8c8c" stroke="#252525"><rect x="4.20" y="-0.70" width="10.30" height="8.20" rx="1.6" /><rect x="5.50" y="0.60" width="7.70" height="5.60" rx="0.6000000000000001" fill="#9b9b9b" stroke="none"/><rect x="5.50" y="7.40" width="9.00" height="7.60" rx="1.6" /><rect x="6.80" y="8.70" width="6.40" height="5.00" rx="0.6000000000000001" fill="#9b9b9b" stroke="none"/><rect x="4.20" y="15.30" width="10.30" height="10.80" rx="1.6" /><rect x="5.50" y="16.60" width="7.70" height="8.20" rx="0.6000000000000001" fill="#9b9b9b" stroke="none"/><rect x="5.50" y="26.10" width="9.00" height="11.30" rx="1.6" /><rect x="6.80" y="27.40" width="6.40" height="8.70" rx="0.6000000000000001" fill="#9b9b9b" stroke="none"/><rect x="3.30" y="37.40" width="11.20" height="10.80" rx="1.6" /><rect x="4.60" y="38.70" width="8.60" height="8.20" rx="0.6000000000000001" fill="#9b9b9b" stroke="none"/><rect x="6.20" y="48.20" width="8.30" height="7.70" rx="1.6" /><rect x="7.50" y="49.50" width="5.70" height="5.10" rx="0.6000000000000001" fill="#9b9b9b" stroke="none"/><rect x="5.50" y="56.10" width="9.00" height="7.60" rx="1.6" /><rect x="6.80" y="57.40" width="6.40" height="5.00" rx="0.6000000000000001" fill="#9b9b9b" stroke="none"/></g><g transform="translate(108.000,159.860) scale(1.00000,0.99781)" fill="#8c8c8c" stroke="#252525"></g><g transform="translate(172.000,159.860) scale(1.00000,0.99781)" fill="#8c8c8c" stroke="#252525"></g><g transform="translate(236.000,159.860) scale(1.00000,0.99781)" fill="#8c8c8c" stroke="#252525"><rect x="50.50" y="0.30" width="8.90" height="8.20" rx="1.6" /><rect x="51.80" y="1.60" width="6.30" height="5.60" rx="0.6000000000000001" fill="#9b9b9b" stroke="none"/><rect x="50.50" y="8.40" width="7.70" height="7.60" rx="1.6" /><rect x="51.80" y="9.70" width="5.10" height="5.00" rx="0.6000000000000001" fill="#9b9b9b" stroke="none"/><rect x="50.50" y="16.30" width="11.30" height="10.80" rx="1.6" /><rect x="51.80" y="17.60" width="8.70" height="8.20" rx="0.6000000000000001" fill="#9b9b9b" stroke="none"/><rect x="50.50" y="27.10" width="8.90" height="11.30" rx="1.6" /><rect x="51.80" y="28.40" width="6.30" height="8.70" rx="0.6000000000000001" fill="#9b9b9b" stroke="none"/><rect x="50.50" y="38.40" width="10.50" height="10.80" rx="1.6" /><rect x="51.80" y="39.70" width="7.90" height="8.20" rx="0.6000000000000001" fill="#9b9b9b" stroke="none"/><rect x="50.50" y="49.20" width="8.90" height="7.70" rx="1.6" /><rect x="51.80" y="50.50" width="6.30" height="5.10" rx="0.6000000000000001" fill="#9b9b9b" stroke="none"/><rect x="50.50" y="57.10" width="8.10" height="7.60" rx="1.6" /><rect x="51.80" y="58.40" width="5.50" height="5.00" rx="0.6000000000000001" fill="#9b9b9b" stroke="none"/></g><g transform="translate(44.000,223.720) scale(1.00000,0.99781)" fill="#8c8c8c" stroke="#252525"><rect x="4.20" y="-0.70" width="10.30" height="8.20" rx="1.6" /><rect x="5.50" y="0.60" width="7.70" height="5.60" rx="0.6000000000000001" fill="#9b9b9b" stroke="none"/><rect x="5.50" y="7.40" width="9.00" height="7.60" rx="1.6" /><rect x="6.80" y="8.70" width="6.40" height="5.00" rx="0.6000000000000001" fill="#9b9b9b" stroke="none"/><rect x="4.20" y="15.30" width="10.30" height="10.80" rx="1.6" /><rect x="5.50" y="16.60" width="7.70" height="8.20" rx="0.6000000000000001" fill="#9b9b9b" stroke="none"/><rect x="5.50" y="26.10" width="9.00" height="11.30" rx="1.6" /><rect x="6.80" y="27.40" width="6.40" height="8.70" rx="0.6000000000000001" fill="#9b9b9b" stroke="none"/><rect x="3.30" y="37.40" width="11.20" height="10.80" rx="1.6" /><rect x="4.60" y="38.70" width="8.60" height="8.20" rx="0.6000000000000001" fill="#9b9b9b" stroke="none"/><rect x="6.20" y="48.20" width="8.30" height="7.70" rx="1.6" /><rect x="7.50" y="49.50" width="5.70" height="5.10" rx="0.6000000000000001" fill="#9b9b9b" stroke="none"/><rect x="5.50" y="56.10" width="9.00" height="7.60" rx="1.6" /><rect x="6.80" y="57.40" width="6.40" height="5.00" rx="0.6000000000000001" fill="#9b9b9b" stroke="none"/></g><g transform="translate(108.000,223.720) scale(1.00000,0.99781)" fill="#8c8c8c" stroke="#252525"></g><g transform="translate(44.000,287.580) scale(1.00000,0.99781)" fill="#8c8c8c" stroke="#252525"><rect x="16.30" y="50.50" width="10.80" height="11.30" rx="1.6" /><rect x="17.60" y="51.80" width="8.20" height="8.70" rx="0.6000000000000001" fill="#9b9b9b" stroke="none"/><rect x="27.10" y="50.50" width="11.30" height="8.90" rx="1.6" /><rect x="28.40" y="51.80" width="8.70" height="6.30" rx="0.6000000000000001" fill="#9b9b9b" stroke="none"/><rect x="38.40" y="50.50" width="10.80" height="10.50" rx="1.6" /><rect x="39.70" y="51.80" width="8.20" height="7.90" rx="0.6000000000000001" fill="#9b9b9b" stroke="none"/><rect x="49.20" y="50.50" width="7.70" height="8.90" rx="1.6" /><rect x="50.50" y="51.80" width="5.10" height="6.30" rx="0.6000000000000001" fill="#9b9b9b" stroke="none"/><rect x="57.10" y="50.50" width="7.60" height="8.10" rx="1.6" /><rect x="58.40" y="51.80" width="5.00" height="5.50" rx="0.6000000000000001" fill="#9b9b9b" stroke="none"/><rect x="4.20" y="-0.70" width="10.30" height="8.20" rx="1.6" /><rect x="5.50" y="0.60" width="7.70" height="5.60" rx="0.6000000000000001" fill="#9b9b9b" stroke="none"/><rect x="5.50" y="7.40" width="9.00" height="7.60" rx="1.6" /><rect x="6.80" y="8.70" width="6.40" height="5.00" rx="0.6000000000000001" fill="#9b9b9b" stroke="none"/><rect x="4.20" y="15.30" width="10.30" height="10.80" rx="1.6" /><rect x="5.50" y="16.60" width="7.70" height="8.20" rx="0.6000000000000001" fill="#9b9b9b" stroke="none"/><rect x="5.50" y="26.10" width="9.00" height="11.30" rx="1.6" /><rect x="6.80" y="27.40" width="6.40" height="8.70" rx="0.6000000000000001" fill="#9b9b9b" stroke="none"/><rect x="3.30" y="37.40" width="11.20" height="10.80" rx="1.6" /><rect x="4.60" y="38.70" width="8.60" height="8.20" rx="0.6000000000000001" fill="#9b9b9b" stroke="none"/><rect x="0.80" y="48.20" width="15.00" height="15.00" rx="2.5" /><rect x="2.10" y="49.50" width="12.40" height="12.40" rx="1.5" fill="#9b9b9b" stroke="none"/></g><g transform="translate(108.000,287.580) scale(1.00000,0.99781)" fill="#8c8c8c" stroke="#252525"><rect x="0.30" y="50.50" width="8.20" height="8.90" rx="1.6" /><rect x="1.60" y="51.80" width="5.60" height="6.30" rx="0.6000000000000001" fill="#9b9b9b" stroke="none"/><rect x="8.40" y="50.50" width="7.60" height="7.70" rx="1.6" /><rect x="9.70" y="51.80" width="5.00" height="5.10" rx="0.6000000000000001" fill="#9b9b9b" stroke="none"/><rect x="16.30" y="50.50" width="10.80" height="11.30" rx="1.6" /><rect x="17.60" y="51.80" width="8.20" height="8.70" rx="0.6000000000000001" fill="#9b9b9b" stroke="none"/><rect x="27.10" y="50.50" width="11.30" height="8.90" rx="1.6" /><rect x="28.40" y="51.80" width="8.70" height="6.30" rx="0.6000000000000001" fill="#9b9b9b" stroke="none"/><rect x="38.40" y="50.50" width="10.80" height="10.50" rx="1.6" /><rect x="39.70" y="51.80" width="8.20" height="7.90" rx="0.6000000000000001" fill="#9b9b9b" stroke="none"/><rect x="49.20" y="50.50" width="7.70" height="8.90" rx="1.6" /><rect x="50.50" y="51.80" width="5.10" height="6.30" rx="0.6000000000000001" fill="#9b9b9b" stroke="none"/><rect x="57.10" y="50.50" width="7.60" height="8.10" rx="1.6" /><rect x="58.40" y="51.80" width="5.00" height="5.50" rx="0.6000000000000001" fill="#9b9b9b" stroke="none"/></g><g transform="translate(236.000,287.580) scale(1.00000,0.99781)" fill="#8c8c8c" stroke="#252525"></g><g transform="translate(300.000,287.580) scale(1.00000,0.99781)" fill="#8c8c8c" stroke="#252525"><rect x="50.50" y="0.30" width="8.90" height="8.20" rx="1.6" /><rect x="51.80" y="1.60" width="6.30" height="5.60" rx="0.6000000000000001" fill="#9b9b9b" stroke="none"/><rect x="50.50" y="8.40" width="7.70" height="7.60" rx="1.6" /><rect x="51.80" y="9.70" width="5.10" height="5.00" rx="0.6000000000000001" fill="#9b9b9b" stroke="none"/><rect x="50.50" y="16.30" width="11.30" height="10.80" rx="1.6" /><rect x="51.80" y="17.60" width="8.70" height="8.20" rx="0.6000000000000001" fill="#9b9b9b" stroke="none"/><rect x="50.50" y="27.10" width="8.90" height="11.30" rx="1.6" /><rect x="51.80" y="28.40" width="6.30" height="8.70" rx="0.6000000000000001" fill="#9b9b9b" stroke="none"/><rect x="50.50" y="38.40" width="10.50" height="10.80" rx="1.6" /><rect x="51.80" y="39.70" width="7.90" height="8.20" rx="0.6000000000000001" fill="#9b9b9b" stroke="none"/><rect x="50.50" y="49.20" width="8.90" height="7.70" rx="1.6" /><rect x="51.80" y="50.50" width="6.30" height="5.10" rx="0.6000000000000001" fill="#9b9b9b" stroke="none"/><rect x="50.50" y="57.10" width="8.10" height="7.60" rx="1.6" /><rect x="51.80" y="58.40" width="5.50" height="5.00" rx="0.6000000000000001" fill="#9b9b9b" stroke="none"/></g><g transform="translate(236.000,351.440) scale(1.00000,0.99781)" fill="#8c8c8c" stroke="#252525"><rect x="0.30" y="50.50" width="8.20" height="8.90" rx="1.6" /><rect x="1.60" y="51.80" width="5.60" height="6.30" rx="0.6000000000000001" fill="#9b9b9b" stroke="none"/><rect x="8.40" y="50.50" width="7.60" height="7.70" rx="1.6" /><rect x="9.70" y="51.80" width="5.00" height="5.10" rx="0.6000000000000001" fill="#9b9b9b" stroke="none"/><rect x="16.30" y="50.50" width="10.80" height="11.30" rx="1.6" /><rect x="17.60" y="51.80" width="8.20" height="8.70" rx="0.6000000000000001" fill="#9b9b9b" stroke="none"/><rect x="27.10" y="50.50" width="11.30" height="8.90" rx="1.6" /><rect x="28.40" y="51.80" width="8.70" height="6.30" rx="0.6000000000000001" fill="#9b9b9b" stroke="none"/><rect x="38.40" y="50.50" width="10.80" height="10.50" rx="1.6" /><rect x="39.70" y="51.80" width="8.20" height="7.90" rx="0.6000000000000001" fill="#9b9b9b" stroke="none"/><rect x="49.20" y="50.50" width="7.70" height="8.90" rx="1.6" /><rect x="50.50" y="51.80" width="5.10" height="6.30" rx="0.6000000000000001" fill="#9b9b9b" stroke="none"/><rect x="57.10" y="50.50" width="7.60" height="8.10" rx="1.6" /><rect x="58.40" y="51.80" width="5.00" height="5.50" rx="0.6000000000000001" fill="#9b9b9b" stroke="none"/></g><g transform="translate(300.000,351.440) scale(1.00000,0.99781)" fill="#8c8c8c" stroke="#252525"><rect x="0.30" y="50.50" width="8.20" height="8.90" rx="1.6" /><rect x="1.60" y="51.80" width="5.60" height="6.30" rx="0.6000000000000001" fill="#9b9b9b" stroke="none"/><rect x="8.40" y="50.50" width="7.60" height="7.70" rx="1.6" /><rect x="9.70" y="51.80" width="5.00" height="5.10" rx="0.6000000000000001" fill="#9b9b9b" stroke="none"/><rect x="16.30" y="50.50" width="10.80" height="11.30" rx="1.6" /><rect x="17.60" y="51.80" width="8.20" height="8.70" rx="0.6000000000000001" fill="#9b9b9b" stroke="none"/><rect x="27.10" y="50.50" width="11.30" height="8.90" rx="1.6" /><rect x="28.40" y="51.80" width="8.70" height="6.30" rx="0.6000000000000001" fill="#9b9b9b" stroke="none"/><rect x="38.40" y="50.50" width="10.80" height="10.50" rx="1.6" /><rect x="39.70" y="51.80" width="8.20" height="7.90" rx="0.6000000000000001" fill="#9b9b9b" stroke="none"/><rect x="50.50" y="0.30" width="8.90" height="8.20" rx="1.6" /><rect x="51.80" y="1.60" width="6.30" height="5.60" rx="0.6000000000000001" fill="#9b9b9b" stroke="none"/><rect x="50.50" y="8.40" width="7.70" height="7.60" rx="1.6" /><rect x="51.80" y="9.70" width="5.10" height="5.00" rx="0.6000000000000001" fill="#9b9b9b" stroke="none"/><rect x="50.50" y="16.30" width="11.30" height="10.80" rx="1.6" /><rect x="51.80" y="17.60" width="8.70" height="8.20" rx="0.6000000000000001" fill="#9b9b9b" stroke="none"/><rect x="50.50" y="27.10" width="8.90" height="11.30" rx="1.6" /><rect x="51.80" y="28.40" width="6.30" height="8.70" rx="0.6000000000000001" fill="#9b9b9b" stroke="none"/><rect x="50.50" y="38.40" width="10.50" height="10.80" rx="1.6" /><rect x="51.80" y="39.70" width="7.90" height="8.20" rx="0.6000000000000001" fill="#9b9b9b" stroke="none"/><rect x="48.20" y="48.20" width="15.00" height="15.00" rx="2.5" /><rect x="49.50" y="49.50" width="12.40" height="12.40" rx="1.5" fill="#9b9b9b" stroke="none"/></g></g>
</svg>
<svg class="pl" width="423" height="495" style="position:absolute;left:0;top:0"><g class="sg"><rect x="44" y="0" width="1" height="495"/><rect x="108" y="0" width="1" height="495"/><rect x="172" y="0" width="1" height="495"/><rect x="236" y="0" width="1" height="495"/><rect x="300" y="0" width="1" height="495"/><rect x="364" y="0" width="1" height="495"/></g></svg>
<svg class="pl" width="423" height="495" style="position:absolute;left:0;top:0"><g class="sg"><rect x="0" y="32" width="423" height="1"/><rect x="0" y="96" width="423" height="1"/><rect x="0" y="159" width="423" height="1"/><rect x="0" y="223" width="423" height="1"/><rect x="0" y="287" width="423" height="1"/><rect x="0" y="351" width="423" height="1"/><rect x="0" y="415" width="423" height="1"/><rect x="0" y="479" width="423" height="1"/></g></svg>
<svg width="423" height="495" style="position:absolute;left:0;top:0"><rect x="236.5" y="287.5" width="128" height="128" fill="none" stroke="#f5861a" stroke-width="1"/></svg>
</div>
<div class="a" style="left:423px;top:0;width:2px;height:495px;background:#1b1b1b"></div>

<!-- top inspector strip -->
<div class="a" style="left:425px;top:0;width:446px;height:4px;background:#3c3c3c;overflow:hidden">
  <div class="t" style="left:19px;top:-2px;color:#b4b4b4">Collider Type</div>
  <div class="a" style="left:181px;top:-10px;width:247px;height:14px;background:#515151;border-radius:3px"></div>
  <div class="t" style="left:185px;top:-2px">None</div>
  <div class="a" style="left:415.5px;top:1px;width:0;height:0;border-left:3.6px solid transparent;border-right:3.6px solid transparent;border-top:4.5px solid #c4c4c4"></div>
</div>
<div class="a" style="left:425px;top:4px;width:446px;height:2px;background:#1b1b1b"></div>
<!-- tab bar -->
<div class="a" style="left:425px;top:6px;width:446px;height:19px;background:#282828;border-top-right-radius:4px"></div>
<div class="a" style="left:425px;top:6px;width:85px;height:19px;background:#3c3c3c;border-top-left-radius:4px;border-top-right-radius:2px"></div>
<div class="t" style="left:432.5px;top:10px;color:#c8c8c8">Tile Palette</div>
<div class="a" style="left:856px;top:10px;width:2px;height:2px;background:#d0d0d0"></div>
<div class="a" style="left:856px;top:14px;width:2px;height:2px;background:#d0d0d0"></div>
<div class="a" style="left:856px;top:18px;width:2px;height:2px;background:#d0d0d0"></div>

<!-- toolbar -->
<div class="grp" style="left:536px;top:30px;width:224px;height:20px"></div>
<div class="btn" style="left:537px;top:31px;width:31px;height:18px;border-radius:2px 0 0 2px"></div>
<div class="btn on" style="left:569px;top:31px;width:31px;height:18px"></div>
<div class="btn" style="left:601px;top:31px;width:31px;height:18px"></div>
<div class="btn" style="left:633px;top:31px;width:31px;height:18px"></div>
<div class="btn" style="left:665px;top:31px;width:31px;height:18px"></div>
<div class="btn" style="left:697px;top:31px;width:31px;height:18px"></div>
<div class="btn" style="left:729px;top:31px;width:30px;height:18px;border-radius:0 2px 2px 0"></div>
<svg class="a" style="left:0;top:0" width="871" height="495">
  <g fill="#cdcdcd" stroke="none">
    <!-- select arrow -->
    <path d="M550.1 33.8 L557.9 41.5 L553.2 42.3 L550.6 45.9 L550.1 45.9 Z"/>
    <!-- move -->
    <rect x="581.9" y="36.9" width="6.1" height="6.0"/>
    <path d="M584.9 32.0 L587.9 35.0 L584.9 34.3 L581.9 35.0 Z"/>
    <path d="M584.9 48.2 L587.9 45.2 L584.9 45.9 L581.9 45.2 Z"/>
    <path d="M577.0 39.9 L580.0 36.9 L579.3 39.9 L580.0 42.9 Z"/>
    <path d="M593.0 39.9 L590.0 36.9 L590.7 39.9 L590.0 42.9 Z"/>
    <!-- brush -->
    <path d="M622.6 33.0 Q623.9 32.4 624.3 33.7 L617.8 42.3 L614.3 39.1 Z"/>
    <circle cx="613.0" cy="44.0" r="2.1"/>
    <path d="M611.2 43.2 L613.0 46.1 L609.9 46.0 Z"/>
    <!-- box select -->
    <rect x="645.1" y="36.3" width="5.2" height="5.8"/>
    <path d="M650.9 39.9 L656.0 44.3 L652.6 44.6 L651.1 47.0 Z"/>
    <!-- picker -->
    <path d="M684.3 35.0 Q686.0 33.2 687.4 35.0 Q688.3 36.4 686.3 38.4 L685.2 39.4 Z"/>
    <path d="M679.6 36.9 L681.0 35.6 L686.0 40.4 L684.7 41.8 Z"/>
    <path d="M681.3 39.3 L683.0 41.0 L676.6 46.4 Q675.2 47.2 674.6 46.2 Q674.0 45.2 675.0 44.4 Z"/>
    <!-- eraser fill -->
    <path d="M714.9 33.8 L719.0 37.9 L715.4 41.5 L711.3 37.4 Z"/>
    <!-- bucket liquid -->
    <path d="M739.6 38.6 L751.0 39.2 L746.5 44.3 Z"/>
    <circle cx="739.0" cy="45.2" r="1.9"/>
    <path d="M738.6 39.0 L740.2 39.6 L740.4 44.8 L737.6 44.8 Z"/>
  </g>
  <path d="M676.2 45.0 L680.8 41.0" stroke="#3a3a3a" stroke-width="0.9"/>
  <g fill="none" stroke="#cdcdcd" stroke-width="1.4">
    <rect x="643.5" y="34.5" width="9.0" height="9.0" rx="1.4" stroke-dasharray="3.2 1.3 3.0 1.3"/>
    <!-- eraser -->
    <path d="M714.9 33.8 L719.0 37.9 L710.9 45.7 L706.8 41.6 Z" stroke-width="1.2"/>
    <path d="M710.4 45.6 L718.0 45.6" stroke-width="1.2"/>
    <!-- bucket outline -->
    <path d="M744.7 33.2 L750.8 39.3 L746.5 44.3 L739.3 38.5 Z" stroke-width="1.3"/>
  </g>
  <rect x="650.2" y="39.4" width="2.2" height="2.0" fill="#393939"/>
  <path d="M650.9 39.9 L656.0 44.3 L652.6 44.6 L651.1 47.0 Z" fill="#cdcdcd"/>
</svg>

<!-- tilemap row -->
<svg class="a" style="left:0;top:0" width="871" height="495">
  <path d="M544.9 72.4 L552 68.6 L559.2 72.4 L552 76.2 Z" fill="#d0d0d0"/>
  <path d="M547.4 67.5 L552 64.2 L556.6 67.5 L552 70.8 Z" fill="#383838" stroke="#383838" stroke-width="3"/><path d="M547.6 67.5 L552 64.4 L556.4 67.5 L552 70.6 Z" fill="#383838" stroke="#9f80f2" stroke-width="1.2"/>
</svg>
<div class="dd" style="left:563px;top:60px;width:190px;height:20px;border-radius:2px"><div class="arr" style="left:175px;top:7px"></div></div>
<div class="t" style="left:567px;top:63px">Tilemap</div>

<!-- tiles row -->
<svg class="a" style="left:0;top:0" width="871" height="495">
  <g fill="#9f7df0">
    <rect x="433.2" y="93.2" width="3.2" height="3.4"/>
    <rect x="438" y="94" width="3" height="3"/>
    <rect x="442" y="94" width="3" height="3"/>
    <rect x="434" y="98.2" width="3" height="2.8"/>
    <rect x="434" y="102" width="2.4" height="2.8"/>
    <rect x="438.4" y="98" width="2.6" height="1.8"/>
    <rect x="442.4" y="98" width="2.6" height="1.8"/>
  </g>
  <ellipse cx="442.3" cy="102.8" rx="5.2" ry="4.3" fill="#cfcfcf"/>
  <g fill="#383838"><circle cx="440" cy="102.5" r="0.9"/><circle cx="442.4" cy="100.5" r="0.9"/><circle cx="444.6" cy="101.6" r="0.9"/><circle cx="441.8" cy="105.2" r="0.9"/></g>
</svg>
<div class="dd" style="left:453px;top:91px;width:150px;height:20px"><div class="arr" style="left:135px;top:7px"></div></div>
<div class="t" style="left:457px;top:95px">Tiles</div>

<div class="grp" style="left:737px;top:90px;width:128px;height:20px"></div>
<div class="btn" style="left:738px;top:91px;width:31px;height:18px;border-radius:2px 0 0 2px"></div>
<div class="btn on" style="left:770px;top:91px;width:31px;height:18px"></div>
<div class="btn" style="left:802px;top:91px;width:31px;height:18px"></div>
<div class="btn on" style="left:834px;top:91px;width:30px;height:18px;border-radius:0 2px 2px 0"></div>
<svg class="a" style="left:0;top:0" width="871" height="495">
  <!-- pencil -->
  <g fill="#cdcdcd">
    <path d="M756.2 95.0 L759.0 97.8 L750.2 106.4 L747.4 103.6 Z"/>
    <path d="M757.0 94.2 Q758.2 93.2 759.2 94.2 Q760.2 95.2 759.3 96.4 L759.0 96.8 L756.6 94.4 Z"/>
    <path d="M747.0 104.0 L749.8 106.8 L746.2 107.6 Z"/>
  </g>
  <path d="M755.6 95.4 L758.6 98.4 M748.0 103.0 L751.0 106.0" stroke="#393939" stroke-width="0.8"/>
  <!-- grid -->
  <g stroke="#d2d2d2" stroke-width="1.15" fill="none">
    <path d="M780.6 93.1 V105.5 M784.8 93.1 V105.5 M788.9 93.1 V105.5 M778.2 95.2 H791.0 M778.2 99.3 H791.0 M778.2 103.4 H791.0"/>
  </g>
  <!-- gizmo -->
  <g stroke="#cdcdcd" stroke-width="1.3" fill="none">
    <circle cx="817.1" cy="100.0" r="6.6"/>
    <path d="M817.4 93.8 Q820.6 97.2 819.5 101.7 Q818.6 104.6 815.6 106.4"/>
    <path d="M810.5 99.3 Q814.6 102.4 819.5 101.7 Q822.4 101.0 823.6 99.0"/>
  </g>
  <g fill="#cdcdcd">
    <circle cx="817.4" cy="93.8" r="1.8"/><circle cx="810.5" cy="99.3" r="1.8"/><circle cx="819.5" cy="101.7" r="1.8"/>
  </g>
  <!-- gear + brush -->
  <g fill="#cdcdcd">
    <circle cx="846.7" cy="97.9" r="4.0"/>
    <path d="M855.2 97.8 Q856.2 97.2 856.4 98.4 L850.6 104.8 L848.9 103.2 Z"/>
    <circle cx="847.6" cy="105.6" r="1.7"/>
    <path d="M846.4 105.0 L847.8 107.6 L845.6 107.6 Z"/>
  </g>
  <g stroke="#cdcdcd" stroke-width="2.0">
    <path d="M846.7 92.3 V93.9 M846.7 101.9 V103.5 M841.1 97.9 H842.7 M850.7 97.9 H852.3 M842.7 93.9 L843.9 95.1 M849.5 100.7 L850.7 101.9 M842.7 101.9 L843.9 100.7 M849.5 95.1 L850.7 93.9"/>
  </g>
  <circle cx="846.7" cy="97.9" r="1.9" fill="#4e4e4e"/>
</svg>

<!-- palette -->
<div class="a" style="left:430px;top:112px;width:436px;height:264px;background:#282828;overflow:hidden">
<svg width="436" height="264" style="position:absolute;left:0;top:0">
<g transform="translate(-430,-112)">
<rect x="430" y="112" width="2" height="264" fill="#232323"/><g class="pl pg"><rect x="434" y="112" width="2" height="264"/><rect x="487" y="112" width="2" height="264"/><rect x="540" y="112" width="2" height="264"/><rect x="592" y="112" width="2" height="264"/><rect x="645" y="112" width="2" height="264"/><rect x="698" y="112" width="2" height="264"/><rect x="751" y="112" width="2" height="264"/><rect x="803" y="112" width="2" height="264"/><rect x="856" y="112" width="2" height="264"/></g><g class="pl pg"><rect x="430" y="142" width="436" height="2"/><rect x="430" y="195" width="436" height="2"/><rect x="430" y="248" width="436" height="2"/><rect x="430" y="301" width="436" height="2"/><rect x="430" y="353" width="436" height="2"/></g>
<g><g transform="translate(540.300,143.350) scale(0.82422,0.82422)" shape-rendering="crispEdges"><rect x="-0.5" y="-0.5" width="65.0" height="65.0" fill="#343434"/><g shape-rendering="auto" stroke="#434343" stroke-width="0.9"><path d="M6.80 6.70h2.4M8.00 5.50v2.4"/><path d="M22.80 8.40h2.4M24.00 7.20v2.4"/><path d="M39.50 7.80h2.4M40.70 6.60v2.4"/><path d="M55.80 6.70h2.4M57.00 5.50v2.4"/><path d="M15.40 16.80h2.4M16.60 15.60v2.4"/><path d="M31.80 15.30h2.4M33.00 14.10v2.4"/><path d="M49.50 16.30h2.4M50.70 15.10v2.4"/><path d="M8.50 24.20h2.4M9.70 23.00v2.4"/><path d="M23.80 23.40h2.4M25.00 22.20v2.4"/><path d="M40.80 23.00h2.4M42.00 21.80v2.4"/><path d="M55.80 22.90h2.4M57.00 21.70v2.4"/><path d="M15.80 32.30h2.4M17.00 31.10v2.4"/><path d="M31.80 31.30h2.4M33.00 30.10v2.4"/><path d="M46.70 32.30h2.4M47.90 31.10v2.4"/><path d="M7.50 38.80h2.4M8.70 37.60v2.4"/><path d="M23.40 38.30h2.4M24.60 37.10v2.4"/><path d="M39.50 40.40h2.4M40.70 39.20v2.4"/><path d="M56.40 38.30h2.4M57.60 37.10v2.4"/><path d="M13.70 48.30h2.4M14.90 47.10v2.4"/><path d="M29.50 47.90h2.4M30.70 46.70v2.4"/><path d="M46.90 49.20h2.4M48.10 48.00v2.4"/><path d="M7.80 57.30h2.4M9.00 56.10v2.4"/><path d="M23.40 55.90h2.4M24.60 54.70v2.4"/><path d="M39.50 57.30h2.4M40.70 56.10v2.4"/><path d="M56.60 55.40h2.4M57.80 54.20v2.4"/></g></g><g transform="translate(540.300,143.350) scale(0.82422,0.82422)" fill="#8c8c8c" stroke="#252525"></g><g transform="translate(593.050,143.350) scale(0.82422,0.82422)" shape-rendering="crispEdges"><rect x="-0.5" y="-0.5" width="65.0" height="65.0" fill="#343434"/><g shape-rendering="auto" stroke="#434343" stroke-width="0.9"><path d="M6.80 6.70h2.4M8.00 5.50v2.4"/><path d="M22.80 8.40h2.4M24.00 7.20v2.4"/><path d="M39.50 7.80h2.4M40.70 6.60v2.4"/><path d="M55.80 6.70h2.4M57.00 5.50v2.4"/><path d="M15.40 16.80h2.4M16.60 15.60v2.4"/><path d="M31.80 15.30h2.4M33.00 14.10v2.4"/><path d="M49.50 16.30h2.4M50.70 15.10v2.4"/><path d="M8.50 24.20h2.4M9.70 23.00v2.4"/><path d="M23.80 23.40h2.4M25.00 22.20v2.4"/><path d="M40.80 23.00h2.4M42.00 21.80v2.4"/><path d="M55.80 22.90h2.4M57.00 21.70v2.4"/><path d="M15.80 32.30h2.4M17.00 31.10v2.4"/><path d="M31.80 31.30h2.4M33.00 30.10v2.4"/><path d="M46.70 32.30h2.4M47.90 31.10v2.4"/><path d="M7.50 38.80h2.4M8.70 37.60v2.4"/><path d="M23.40 38.30h2.4M24.60 37.10v2.4"/><path d="M39.50 40.40h2.4M40.70 39.20v2.4"/><path d="M56.40 38.30h2.4M57.60 37.10v2.4"/><path d="M13.70 48.30h2.4M14.90 47.10v2.4"/><path d="M29.50 47.90h2.4M30.70 46.70v2.4"/><path d="M46.90 49.20h2.4M48.10 48.00v2.4"/><path d="M7.80 57.30h2.4M9.00 56.10v2.4"/><path d="M23.40 55.90h2.4M24.60 54.70v2.4"/><path d="M39.50 57.30h2.4M40.70 56.10v2.4"/><path d="M56.60 55.40h2.4M57.80 54.20v2.4"/></g></g><g transform="translate(593.050,143.350) scale(0.82422,0.82422)" fill="#8c8c8c" stroke="#252525"><rect x="0.80" y="0.80" width="15.00" height="15.00" rx="2.5" /><rect x="2.10" y="2.10" width="12.40" height="12.40" rx="1.5" fill="#9b9b9b" stroke="none"/></g><g transform="translate(645.800,143.350) scale(0.82422,0.82422)" shape-rendering="crispEdges"><rect x="-0.5" y="-0.5" width="65.0" height="65.0" fill="#343434"/><g shape-rendering="auto" stroke="#434343" stroke-width="0.9"><path d="M6.80 6.70h2.4M8.00 5.50v2.4"/><path d="M22.80 8.40h2.4M24.00 7.20v2.4"/><path d="M39.50 7.80h2.4M40.70 6.60v2.4"/><path d="M55.80 6.70h2.4M57.00 5.50v2.4"/><path d="M15.40 16.80h2.4M16.60 15.60v2.4"/><path d="M31.80 15.30h2.4M33.00 14.10v2.4"/><path d="M49.50 16.30h2.4M50.70 15.10v2.4"/><path d="M8.50 24.20h2.4M9.70 23.00v2.4"/><path d="M23.80 23.40h2.4M25.00 22.20v2.4"/><path d="M40.80 23.00h2.4M42.00 21.80v2.4"/><path d="M55.80 22.90h2.4M57.00 21.70v2.4"/><path d="M15.80 32.30h2.4M17.00 31.10v2.4"/><path d="M31.80 31.30h2.4M33.00 30.10v2.4"/><path d="M46.70 32.30h2.4M47.90 31.10v2.4"/><path d="M7.50 38.80h2.4M8.70 37.60v2.4"/><path d="M23.40 38.30h2.4M24.60 37.10v2.4"/><path d="M39.50 40.40h2.4M40.70 39.20v2.4"/><path d="M56.40 38.30h2.4M57.60 37.10v2.4"/><path d="M13.70 48.30h2.4M14.90 47.10v2.4"/><path d="M29.50 47.90h2.4M30.70 46.70v2.4"/><path d="M46.90 49.20h2.4M48.10 48.00v2.4"/><path d="M7.80 57.30h2.4M9.00 56.10v2.4"/><path d="M23.40 55.90h2.4M24.60 54.70v2.4"/><path d="M39.50 57.30h2.4M40.70 56.10v2.4"/><path d="M56.60 55.40h2.4M57.80 54.20v2.4"/></g></g><g transform="translate(645.800,143.350) scale(0.82422,0.82422)" fill="#8c8c8c" stroke="#252525"><rect x="0.80" y="0.80" width="15.00" height="15.00" rx="2.5" /><rect x="2.10" y="2.10" width="12.40" height="12.40" rx="1.5" fill="#9b9b9b" stroke="none"/><rect x="48.20" y="0.80" width="15.00" height="15.00" rx="2.5" /><rect x="49.50" y="2.10" width="12.40" height="12.40" rx="1.5" fill="#9b9b9b" stroke="none"/></g><g transform="translate(698.550,143.350) scale(0.82422,0.82422)" shape-rendering="crispEdges"><rect x="-0.5" y="-0.5" width="65.0" height="65.0" fill="#343434"/><g shape-rendering="auto" stroke="#434343" stroke-width="0.9"><path d="M6.80 6.70h2.4M8.00 5.50v2.4"/><path d="M22.80 8.40h2.4M24.00 7.20v2.4"/><path d="M39.50 7.80h2.4M40.70 6.60v2.4"/><path d="M55.80 6.70h2.4M57.00 5.50v2.4"/><path d="M15.40 16.80h2.4M16.60 15.60v2.4"/><path d="M31.80 15.30h2.4M33.00 14.10v2.4"/><path d="M49.50 16.30h2.4M50.70 15.10v2.4"/><path d="M8.50 24.20h2.4M9.70 23.00v2.4"/><path d="M23.80 23.40h2.4M25.00 22.20v2.4"/><path d="M40.80 23.00h2.4M42.00 21.80v2.4"/><path d="M55.80 22.90h2.4M57.00 21.70v2.4"/><path d="M15.80 32.30h2.4M17.00 31.10v2.4"/><path d="M31.80 31.30h2.4M33.00 30.10v2.4"/><path d="M46.70 32.30h2.4M47.90 31.10v2.4"/><path d="M7.50 38.80h2.4M8.70 37.60v2.4"/><path d="M23.40 38.30h2.4M24.60 37.10v2.4"/><path d="M39.50 40.40h2.4M40.70 39.20v2.4"/><path d="M56.40 38.30h2.4M57.60 37.10v2.4"/><path d="M13.70 48.30h2.4M14.90 47.10v2.4"/><path d="M29.50 47.90h2.4M30.70 46.70v2.4"/><path d="M46.90 49.20h2.4M48.10 48.00v2.4"/><path d="M7.80 57.30h2.4M9.00 56.10v2.4"/><path d="M23.40 55.90h2.4M24.60 54.70v2.4"/><path d="M39.50 57.30h2.4M40.70 56.10v2.4"/><path d="M56.60 55.40h2.4M57.80 54.20v2.4"/></g></g><g transform="translate(698.550,143.350) scale(0.82422,0.82422)" fill="#8c8c8c" stroke="#252525"><rect x="0.80" y="0.80" width="15.00" height="15.00" rx="2.5" /><rect x="2.10" y="2.10" width="12.40" height="12.40" rx="1.5" fill="#9b9b9b" stroke="none"/><rect x="48.20" y="48.20" width="15.00" height="15.00" rx="2.5" /><rect x="49.50" y="49.50" width="12.40" height="12.40" rx="1.5" fill="#9b9b9b" stroke="none"/></g><g transform="translate(540.300,196.100) scale(0.82422,0.82422)" shape-rendering="crispEdges"><rect x="-0.5" y="-0.5" width="65.0" height="65.0" fill="#343434"/><g shape-rendering="auto" stroke="#434343" stroke-width="0.9"><path d="M6.80 6.70h2.4M8.00 5.50v2.4"/><path d="M22.80 8.40h2.4M24.00 7.20v2.4"/><path d="M39.50 7.80h2.4M40.70 6.60v2.4"/><path d="M55.80 6.70h2.4M57.00 5.50v2.4"/><path d="M15.40 16.80h2.4M16.60 15.60v2.4"/><path d="M31.80 15.30h2.4M33.00 14.10v2.4"/><path d="M49.50 16.30h2.4M50.70 15.10v2.4"/><path d="M8.50 24.20h2.4M9.70 23.00v2.4"/><path d="M23.80 23.40h2.4M25.00 22.20v2.4"/><path d="M40.80 23.00h2.4M42.00 21.80v2.4"/><path d="M55.80 22.90h2.4M57.00 21.70v2.4"/><path d="M15.80 32.30h2.4M17.00 31.10v2.4"/><path d="M31.80 31.30h2.4M33.00 30.10v2.4"/><path d="M46.70 32.30h2.4M47.90 31.10v2.4"/><path d="M7.50 38.80h2.4M8.70 37.60v2.4"/><path d="M23.40 38.30h2.4M24.60 37.10v2.4"/><path d="M39.50 40.40h2.4M40.70 39.20v2.4"/><path d="M56.40 38.30h2.4M57.60 37.10v2.4"/><path d="M13.70 48.30h2.4M14.90 47.10v2.4"/><path d="M29.50 47.90h2.4M30.70 46.70v2.4"/><path d="M46.90 49.20h2.4M48.10 48.00v2.4"/><path d="M7.80 57.30h2.4M9.00 56.10v2.4"/><path d="M23.40 55.90h2.4M24.60 54.70v2.4"/><path d="M39.50 57.30h2.4M40.70 56.10v2.4"/><path d="M56.60 55.40h2.4M57.80 54.20v2.4"/></g></g><g transform="translate(540.300,196.100) scale(0.82422,0.82422)" fill="#8c8c8c" stroke="#252525"><rect x="0.80" y="0.80" width="15.00" height="15.00" rx="2.5" /><rect x="2.10" y="2.10" width="12.40" height="12.40" rx="1.5" fill="#9b9b9b" stroke="none"/><rect x="48.20" y="48.20" width="15.00" height="15.00" rx="2.5" /><rect x="49.50" y="49.50" width="12.40" height="12.40" rx="1.5" fill="#9b9b9b" stroke="none"/><rect x="48.20" y="0.80" width="15.00" height="15.00" rx="2.5" /><rect x="49.50" y="2.10" width="12.40" height="12.40" rx="1.5" fill="#9b9b9b" stroke="none"/></g><g transform="translate(593.050,196.100) scale(0.82422,0.82422)" shape-rendering="crispEdges"><rect x="-0.5" y="-0.5" width="65.0" height="65.0" fill="#343434"/><g shape-rendering="auto" stroke="#434343" stroke-width="0.9"><path d="M6.80 6.70h2.4M8.00 5.50v2.4"/><path d="M22.80 8.40h2.4M24.00 7.20v2.4"/><path d="M39.50 7.80h2.4M40.70 6.60v2.4"/><path d="M55.80 6.70h2.4M57.00 5.50v2.4"/><path d="M15.40 16.80h2.4M16.60 15.60v2.4"/><path d="M31.80 15.30h2.4M33.00 14.10v2.4"/><path d="M49.50 16.30h2.4M50.70 15.10v2.4"/><path d="M8.50 24.20h2.4M9.70 23.00v2.4"/><path d="M23.80 23.40h2.4M25.00 22.20v2.4"/><path d="M40.80 23.00h2.4M42.00 21.80v2.4"/><path d="M55.80 22.90h2.4M57.00 21.70v2.4"/><path d="M15.80 32.30h2.4M17.00 31.10v2.4"/><path d="M31.80 31.30h2.4M33.00 30.10v2.4"/><path d="M46.70 32.30h2.4M47.90 31.10v2.4"/><path d="M7.50 38.80h2.4M8.70 37.60v2.4"/><path d="M23.40 38.30h2.4M24.60 37.10v2.4"/><path d="M39.50 40.40h2.4M40.70 39.20v2.4"/><path d="M56.40 38.30h2.4M57.60 37.10v2.4"/><path d="M13.70 48.30h2.4M14.90 47.10v2.4"/><path d="M29.50 47.90h2.4M30.70 46.70v2.4"/><path d="M46.90 49.20h2.4M48.10 48.00v2.4"/><path d="M7.80 57.30h2.4M9.00 56.10v2.4"/><path d="M23.40 55.90h2.4M24.60 54.70v2.4"/><path d="M39.50 57.30h2.4M40.70 56.10v2.4"/><path d="M56.60 55.40h2.4M57.80 54.20v2.4"/></g></g><g transform="translate(593.050,196.100) scale(0.82422,0.82422)" fill="#8c8c8c" stroke="#252525"><rect x="0.80" y="48.20" width="15.00" height="15.00" rx="2.5" /><rect x="2.10" y="49.50" width="12.40" height="12.40" rx="1.5" fill="#9b9b9b" stroke="none"/><rect x="0.80" y="0.80" width="15.00" height="15.00" rx="2.5" /><rect x="2.10" y="2.10" width="12.40" height="12.40" rx="1.5" fill="#9b9b9b" stroke="none"/><rect x="48.20" y="48.20" width="15.00" height="15.00" rx="2.5" /><rect x="49.50" y="49.50" width="12.40" height="12.40" rx="1.5" fill="#9b9b9b" stroke="none"/><rect x="48.20" y="0.80" width="15.00" height="15.00" rx="2.5" /><rect x="49.50" y="2.10" width="12.40" height="12.40" rx="1.5" fill="#9b9b9b" stroke="none"/></g><g transform="translate(645.800,196.100) scale(0.82422,0.82422)" shape-rendering="crispEdges"><rect x="-0.5" y="11.5" width="65.0" height="53.0" fill="#343434"/><g shape-rendering="auto" stroke="#434343" stroke-width="0.9"><path d="M15.40 16.80h2.4M16.60 15.60v2.4"/><path d="M31.80 15.30h2.4M33.00 14.10v2.4"/><path d="M49.50 16.30h2.4M50.70 15.10v2.4"/><path d="M8.50 24.20h2.4M9.70 23.00v2.4"/><path d="M23.80 23.40h2.4M25.00 22.20v2.4"/><path d="M40.80 23.00h2.4M42.00 21.80v2.4"/><path d="M55.80 22.90h2.4M57.00 21.70v2.4"/><path d="M15.80 32.30h2.4M17.00 31.10v2.4"/><path d="M31.80 31.30h2.4M33.00 30.10v2.4"/><path d="M46.70 32.30h2.4M47.90 31.10v2.4"/><path d="M7.50 38.80h2.4M8.70 37.60v2.4"/><path d="M23.40 38.30h2.4M24.60 37.10v2.4"/><path d="M39.50 40.40h2.4M40.70 39.20v2.4"/><path d="M56.40 38.30h2.4M57.60 37.10v2.4"/><path d="M13.70 48.30h2.4M14.90 47.10v2.4"/><path d="M29.50 47.90h2.4M30.70 46.70v2.4"/><path d="M46.90 49.20h2.4M48.10 48.00v2.4"/><path d="M7.80 57.30h2.4M9.00 56.10v2.4"/><path d="M23.40 55.90h2.4M24.60 54.70v2.4"/><path d="M39.50 57.30h2.4M40.70 56.10v2.4"/><path d="M56.60 55.40h2.4M57.80 54.20v2.4"/></g></g><g transform="translate(645.800,196.100) scale(0.82422,0.82422)" fill="#8c8c8c" stroke="#252525"><rect x="0.30" y="4.60" width="8.20" height="8.90" rx="1.6" /><rect x="1.60" y="5.90" width="5.60" height="6.30" rx="0.6000000000000001" fill="#9b9b9b" stroke="none"/><rect x="8.40" y="5.80" width="7.60" height="7.70" rx="1.6" /><rect x="9.70" y="7.10" width="5.00" height="5.10" rx="0.6000000000000001" fill="#9b9b9b" stroke="none"/><rect x="16.30" y="2.20" width="10.80" height="11.30" rx="1.6" /><rect x="17.60" y="3.50" width="8.20" height="8.70" rx="0.6000000000000001" fill="#9b9b9b" stroke="none"/><rect x="27.10" y="4.60" width="11.30" height="8.90" rx="1.6" /><rect x="28.40" y="5.90" width="8.70" height="6.30" rx="0.6000000000000001" fill="#9b9b9b" stroke="none"/><rect x="38.40" y="3.00" width="10.80" height="10.50" rx="1.6" /><rect x="39.70" y="4.30" width="8.20" height="7.90" rx="0.6000000000000001" fill="#9b9b9b" stroke="none"/><rect x="49.20" y="4.60" width="7.70" height="8.90" rx="1.6" /><rect x="50.50" y="5.90" width="5.10" height="6.30" rx="0.6000000000000001" fill="#9b9b9b" stroke="none"/><rect x="57.10" y="5.40" width="7.60" height="8.10" rx="1.6" /><rect x="58.40" y="6.70" width="5.00" height="5.50" rx="0.6000000000000001" fill="#9b9b9b" stroke="none"/></g><g transform="translate(698.550,196.100) scale(0.82422,0.82422)" shape-rendering="crispEdges"><rect x="-0.5" y="11.5" width="65.0" height="53.0" fill="#343434"/><g shape-rendering="auto" stroke="#434343" stroke-width="0.9"><path d="M15.40 16.80h2.4M16.60 15.60v2.4"/><path d="M31.80 15.30h2.4M33.00 14.10v2.4"/><path d="M49.50 16.30h2.4M50.70 15.10v2.4"/><path d="M8.50 24.20h2.4M9.70 23.00v2.4"/><path d="M23.80 23.40h2.4M25.00 22.20v2.4"/><path d="M40.80 23.00h2.4M42.00 21.80v2.4"/><path d="M55.80 22.90h2.4M57.00 21.70v2.4"/><path d="M15.80 32.30h2.4M17.00 31.10v2.4"/><path d="M31.80 31.30h2.4M33.00 30.10v2.4"/><path d="M46.70 32.30h2.4M47.90 31.10v2.4"/><path d="M7.50 38.80h2.4M8.70 37.60v2.4"/><path d="M23.40 38.30h2.4M24.60 37.10v2.4"/><path d="M39.50 40.40h2.4M40.70 39.20v2.4"/><path d="M56.40 38.30h2.4M57.60 37.10v2.4"/><path d="M13.70 48.30h2.4M14.90 47.10v2.4"/><path d="M29.50 47.90h2.4M30.70 46.70v2.4"/><path d="M46.90 49.20h2.4M48.10 48.00v2.4"/><path d="M7.80 57.30h2.4M9.00 56.10v2.4"/><path d="M23.40 55.90h2.4M24.60 54.70v2.4"/><path d="M39.50 57.30h2.4M40.70 56.10v2.4"/><path d="M56.60 55.40h2.4M57.80 54.20v2.4"/></g></g><g transform="translate(698.550,196.100) scale(0.82422,0.82422)" fill="#8c8c8c" stroke="#252525"><rect x="0.30" y="4.60" width="8.20" height="8.90" rx="1.6" /><rect x="1.60" y="5.90" width="5.60" height="6.30" rx="0.6000000000000001" fill="#9b9b9b" stroke="none"/><rect x="8.40" y="5.80" width="7.60" height="7.70" rx="1.6" /><rect x="9.70" y="7.10" width="5.00" height="5.10" rx="0.6000000000000001" fill="#9b9b9b" stroke="none"/><rect x="16.30" y="2.20" width="10.80" height="11.30" rx="1.6" /><rect x="17.60" y="3.50" width="8.20" height="8.70" rx="0.6000000000000001" fill="#9b9b9b" stroke="none"/><rect x="27.10" y="4.60" width="11.30" height="8.90" rx="1.6" /><rect x="28.40" y="5.90" width="8.70" height="6.30" rx="0.6000000000000001" fill="#9b9b9b" stroke="none"/><rect x="38.40" y="3.00" width="10.80" height="10.50" rx="1.6" /><rect x="39.70" y="4.30" width="8.20" height="7.90" rx="0.6000000000000001" fill="#9b9b9b" stroke="none"/><rect x="49.20" y="4.60" width="7.70" height="8.90" rx="1.6" /><rect x="50.50" y="5.90" width="5.10" height="6.30" rx="0.6000000000000001" fill="#9b9b9b" stroke="none"/><rect x="57.10" y="5.40" width="7.60" height="8.10" rx="1.6" /><rect x="58.40" y="6.70" width="5.00" height="5.50" rx="0.6000000000000001" fill="#9b9b9b" stroke="none"/><rect x="48.20" y="48.20" width="15.00" height="15.00" rx="2.5" /><rect x="49.50" y="49.50" width="12.40" height="12.40" rx="1.5" fill="#9b9b9b" stroke="none"/></g><g transform="translate(540.300,248.850) scale(0.82422,0.82422)" shape-rendering="crispEdges"><rect x="-0.5" y="11.5" width="65.0" height="53.0" fill="#343434"/><g shape-rendering="auto" stroke="#434343" stroke-width="0.9"><path d="M15.40 16.80h2.4M16.60 15.60v2.4"/><path d="M31.80 15.30h2.4M33.00 14.10v2.4"/><path d="M49.50 16.30h2.4M50.70 15.10v2.4"/><path d="M8.50 24.20h2.4M9.70 23.00v2.4"/><path d="M23.80 23.40h2.4M25.00 22.20v2.4"/><path d="M40.80 23.00h2.4M42.00 21.80v2.4"/><path d="M55.80 22.90h2.4M57.00 21.70v2.4"/><path d="M15.80 32.30h2.4M17.00 31.10v2.4"/><path d="M31.80 31.30h2.4M33.00 30.10v2.4"/><path d="M46.70 32.30h2.4M47.90 31.10v2.4"/><path d="M7.50 38.80h2.4M8.70 37.60v2.4"/><path d="M23.40 38.30h2.4M24.60 37.10v2.4"/><path d="M39.50 40.40h2.4M40.70 39.20v2.4"/><path d="M56.40 38.30h2.4M57.60 37.10v2.4"/><path d="M13.70 48.30h2.4M14.90 47.10v2.4"/><path d="M29.50 47.90h2.4M30.70 46.70v2.4"/><path d="M46.90 49.20h2.4M48.10 48.00v2.4"/><path d="M7.80 57.30h2.4M9.00 56.10v2.4"/><path d="M23.40 55.90h2.4M24.60 54.70v2.4"/><path d="M39.50 57.30h2.4M40.70 56.10v2.4"/><path d="M56.60 55.40h2.4M57.80 54.20v2.4"/></g></g><g transform="translate(540.300,248.850) scale(0.82422,0.82422)" fill="#8c8c8c" stroke="#252525"><rect x="0.30" y="4.60" width="8.20" height="8.90" rx="1.6" /><rect x="1.60" y="5.90" width="5.60" height="6.30" rx="0.6000000000000001" fill="#9b9b9b" stroke="none"/><rect x="8.40" y="5.80" width="7.60" height="7.70" rx="1.6" /><rect x="9.70" y="7.10" width="5.00" height="5.10" rx="0.6000000000000001" fill="#9b9b9b" stroke="none"/><rect x="16.30" y="2.20" width="10.80" height="11.30" rx="1.6" /><rect x="17.60" y="3.50" width="8.20" height="8.70" rx="0.6000000000000001" fill="#9b9b9b" stroke="none"/><rect x="27.10" y="4.60" width="11.30" height="8.90" rx="1.6" /><rect x="28.40" y="5.90" width="8.70" height="6.30" rx="0.6000000000000001" fill="#9b9b9b" stroke="none"/><rect x="38.40" y="3.00" width="10.80" height="10.50" rx="1.6" /><rect x="39.70" y="4.30" width="8.20" height="7.90" rx="0.6000000000000001" fill="#9b9b9b" stroke="none"/><rect x="49.20" y="4.60" width="7.70" height="8.90" rx="1.6" /><rect x="50.50" y="5.90" width="5.10" height="6.30" rx="0.6000000000000001" fill="#9b9b9b" stroke="none"/><rect x="57.10" y="5.40" width="7.60" height="8.10" rx="1.6" /><rect x="58.40" y="6.70" width="5.00" height="5.50" rx="0.6000000000000001" fill="#9b9b9b" stroke="none"/><rect x="0.80" y="48.20" width="15.00" height="15.00" rx="2.5" /><rect x="2.10" y="49.50" width="12.40" height="12.40" rx="1.5" fill="#9b9b9b" stroke="none"/></g><g transform="translate(593.050,248.850) scale(0.82422,0.82422)" shape-rendering="crispEdges"><rect x="-0.5" y="11.5" width="65.0" height="53.0" fill="#343434"/><g shape-rendering="auto" stroke="#434343" stroke-width="0.9"><path d="M15.40 16.80h2.4M16.60 15.60v2.4"/><path d="M31.80 15.30h2.4M33.00 14.10v2.4"/><path d="M49.50 16.30h2.4M50.70 15.10v2.4"/><path d="M8.50 24.20h2.4M9.70 23.00v2.4"/><path d="M23.80 23.40h2.4M25.00 22.20v2.4"/><path d="M40.80 23.00h2.4M42.00 21.80v2.4"/><path d="M55.80 22.90h2.4M57.00 21.70v2.4"/><path d="M15.80 32.30h2.4M17.00 31.10v2.4"/><path d="M31.80 31.30h2.4M33.00 30.10v2.4"/><path d="M46.70 32.30h2.4M47.90 31.10v2.4"/><path d="M7.50 38.80h2.4M8.70 37.60v2.4"/><path d="M23.40 38.30h2.4M24.60 37.10v2.4"/><path d="M39.50 40.40h2.4M40.70 39.20v2.4"/><path d="M56.40 38.30h2.4M57.60 37.10v2.4"/><path d="M13.70 48.30h2.4M14.90 47.10v2.4"/><path d="M29.50 47.90h2.4M30.70 46.70v2.4"/><path d="M46.90 49.20h2.4M48.10 48.00v2.4"/><path d="M7.80 57.30h2.4M9.00 56.10v2.4"/><path d="M23.40 55.90h2.4M24.60 54.70v2.4"/><path d="M39.50 57.30h2.4M40.70 56.10v2.4"/><path d="M56.60 55.40h2.4M57.80 54.20v2.4"/></g></g><g transform="translate(593.050,248.850) scale(0.82422,0.82422)" fill="#8c8c8c" stroke="#252525"><rect x="0.30" y="4.60" width="8.20" height="8.90" rx="1.6" /><rect x="1.60" y="5.90" width="5.60" height="6.30" rx="0.6000000000000001" fill="#9b9b9b" stroke="none"/><rect x="8.40" y="5.80" width="7.60" height="7.70" rx="1.6" /><rect x="9.70" y="7.10" width="5.00" height="5.10" rx="0.6000000000000001" fill="#9b9b9b" stroke="none"/><rect x="16.30" y="2.20" width="10.80" height="11.30" rx="1.6" /><rect x="17.60" y="3.50" width="8.20" height="8.70" rx="0.6000000000000001" fill="#9b9b9b" stroke="none"/><rect x="27.10" y="4.60" width="11.30" height="8.90" rx="1.6" /><rect x="28.40" y="5.90" width="8.70" height="6.30" rx="0.6000000000000001" fill="#9b9b9b" stroke="none"/><rect x="38.40" y="3.00" width="10.80" height="10.50" rx="1.6" /><rect x="39.70" y="4.30" width="8.20" height="7.90" rx="0.6000000000000001" fill="#9b9b9b" stroke="none"/><rect x="49.20" y="4.60" width="7.70" height="8.90" rx="1.6" /><rect x="50.50" y="5.90" width="5.10" height="6.30" rx="0.6000000000000001" fill="#9b9b9b" stroke="none"/><rect x="57.10" y="5.40" width="7.60" height="8.10" rx="1.6" /><rect x="58.40" y="6.70" width="5.00" height="5.50" rx="0.6000000000000001" fill="#9b9b9b" stroke="none"/><rect x="0.80" y="48.20" width="15.00" height="15.00" rx="2.5" /><rect x="2.10" y="49.50" width="12.40" height="12.40" rx="1.5" fill="#9b9b9b" stroke="none"/><rect x="48.20" y="48.20" width="15.00" height="15.00" rx="2.5" /><rect x="49.50" y="49.50" width="12.40" height="12.40" rx="1.5" fill="#9b9b9b" stroke="none"/></g><g transform="translate(645.800,248.850) scale(0.82422,0.82422)" shape-rendering="crispEdges"><rect x="-0.5" y="11.5" width="65.0" height="41.0" fill="#343434"/><g shape-rendering="auto" stroke="#434343" stroke-width="0.9"><path d="M15.40 16.80h2.4M16.60 15.60v2.4"/><path d="M31.80 15.30h2.4M33.00 14.10v2.4"/><path d="M49.50 16.30h2.4M50.70 15.10v2.4"/><path d="M8.50 24.20h2.4M9.70 23.00v2.4"/><path d="M23.80 23.40h2.4M25.00 22.20v2.4"/><path d="M40.80 23.00h2.4M42.00 21.80v2.4"/><path d="M55.80 22.90h2.4M57.00 21.70v2.4"/><path d="M15.80 32.30h2.4M17.00 31.10v2.4"/><path d="M31.80 31.30h2.4M33.00 30.10v2.4"/><path d="M46.70 32.30h2.4M47.90 31.10v2.4"/><path d="M7.50 38.80h2.4M8.70 37.60v2.4"/><path d="M23.40 38.30h2.4M24.60 37.10v2.4"/><path d="M39.50 40.40h2.4M40.70 39.20v2.4"/><path d="M56.40 38.30h2.4M57.60 37.10v2.4"/><path d="M13.70 48.30h2.4M14.90 47.10v2.4"/><path d="M29.50 47.90h2.4M30.70 46.70v2.4"/><path d="M46.90 49.20h2.4M48.10 48.00v2.4"/></g></g><g transform="translate(645.800,248.850) scale(0.82422,0.82422)" fill="#8c8c8c" stroke="#252525"><rect x="0.30" y="4.60" width="8.20" height="8.90" rx="1.6" /><rect x="1.60" y="5.90" width="5.60" height="6.30" rx="0.6000000000000001" fill="#9b9b9b" stroke="none"/><rect x="8.40" y="5.80" width="7.60" height="7.70" rx="1.6" /><rect x="9.70" y="7.10" width="5.00" height="5.10" rx="0.6000000000000001" fill="#9b9b9b" stroke="none"/><rect x="16.30" y="2.20" width="10.80" height="11.30" rx="1.6" /><rect x="17.60" y="3.50" width="8.20" height="8.70" rx="0.6000000000000001" fill="#9b9b9b" stroke="none"/><rect x="27.10" y="4.60" width="11.30" height="8.90" rx="1.6" /><rect x="28.40" y="5.90" width="8.70" height="6.30" rx="0.6000000000000001" fill="#9b9b9b" stroke="none"/><rect x="38.40" y="3.00" width="10.80" height="10.50" rx="1.6" /><rect x="39.70" y="4.30" width="8.20" height="7.90" rx="0.6000000000000001" fill="#9b9b9b" stroke="none"/><rect x="49.20" y="4.60" width="7.70" height="8.90" rx="1.6" /><rect x="50.50" y="5.90" width="5.10" height="6.30" rx="0.6000000000000001" fill="#9b9b9b" stroke="none"/><rect x="57.10" y="5.40" width="7.60" height="8.10" rx="1.6" /><rect x="58.40" y="6.70" width="5.00" height="5.50" rx="0.6000000000000001" fill="#9b9b9b" stroke="none"/><rect x="0.30" y="50.50" width="8.20" height="8.90" rx="1.6" /><rect x="1.60" y="51.80" width="5.60" height="6.30" rx="0.6000000000000001" fill="#9b9b9b" stroke="none"/><rect x="8.40" y="50.50" width="7.60" height="7.70" rx="1.6" /><rect x="9.70" y="51.80" width="5.00" height="5.10" rx="0.6000000000000001" fill="#9b9b9b" stroke="none"/><rect x="16.30" y="50.50" width="10.80" height="11.30" rx="1.6" /><rect x="17.60" y="51.80" width="8.20" height="8.70" rx="0.6000000000000001" fill="#9b9b9b" stroke="none"/><rect x="27.10" y="50.50" width="11.30" height="8.90" rx="1.6" /><rect x="28.40" y="51.80" width="8.70" height="6.30" rx="0.6000000000000001" fill="#9b9b9b" stroke="none"/><rect x="38.40" y="50.50" width="10.80" height="10.50" rx="1.6" /><rect x="39.70" y="51.80" width="8.20" height="7.90" rx="0.6000000000000001" fill="#9b9b9b" stroke="none"/><rect x="49.20" y="50.50" width="7.70" height="8.90" rx="1.6" /><rect x="50.50" y="51.80" width="5.10" height="6.30" rx="0.6000000000000001" fill="#9b9b9b" stroke="none"/><rect x="57.10" y="50.50" width="7.60" height="8.10" rx="1.6" /><rect x="58.40" y="51.80" width="5.00" height="5.50" rx="0.6000000000000001" fill="#9b9b9b" stroke="none"/></g><g transform="translate(698.550,248.850) scale(0.82422,0.82422)" shape-rendering="crispEdges"><rect x="11.5" y="11.5" width="53.0" height="53.0" fill="#343434"/><g shape-rendering="auto" stroke="#434343" stroke-width="0.9"><path d="M15.40 16.80h2.4M16.60 15.60v2.4"/><path d="M31.80 15.30h2.4M33.00 14.10v2.4"/><path d="M49.50 16.30h2.4M50.70 15.10v2.4"/><path d="M23.80 23.40h2.4M25.00 22.20v2.4"/><path d="M40.80 23.00h2.4M42.00 21.80v2.4"/><path d="M55.80 22.90h2.4M57.00 21.70v2.4"/><path d="M15.80 32.30h2.4M17.00 31.10v2.4"/><path d="M31.80 31.30h2.4M33.00 30.10v2.4"/><path d="M46.70 32.30h2.4M47.90 31.10v2.4"/><path d="M23.40 38.30h2.4M24.60 37.10v2.4"/><path d="M39.50 40.40h2.4M40.70 39.20v2.4"/><path d="M56.40 38.30h2.4M57.60 37.10v2.4"/><path d="M13.70 48.30h2.4M14.90 47.10v2.4"/><path d="M29.50 47.90h2.4M30.70 46.70v2.4"/><path d="M46.90 49.20h2.4M48.10 48.00v2.4"/><path d="M23.40 55.90h2.4M24.60 54.70v2.4"/><path d="M39.50 57.30h2.4M40.70 56.10v2.4"/><path d="M56.60 55.40h2.4M57.80 54.20v2.4"/></g></g><g transform="translate(698.550,248.850) scale(0.82422,0.82422)" fill="#8c8c8c" stroke="#252525"><rect x="16.30" y="2.20" width="10.80" height="11.30" rx="1.6" /><rect x="17.60" y="3.50" width="8.20" height="8.70" rx="0.6000000000000001" fill="#9b9b9b" stroke="none"/><rect x="27.10" y="4.60" width="11.30" height="8.90" rx="1.6" /><rect x="28.40" y="5.90" width="8.70" height="6.30" rx="0.6000000000000001" fill="#9b9b9b" stroke="none"/><rect x="38.40" y="3.00" width="10.80" height="10.50" rx="1.6" /><rect x="39.70" y="4.30" width="8.20" height="7.90" rx="0.6000000000000001" fill="#9b9b9b" stroke="none"/><rect x="49.20" y="4.60" width="7.70" height="8.90" rx="1.6" /><rect x="50.50" y="5.90" width="5.10" height="6.30" rx="0.6000000000000001" fill="#9b9b9b" stroke="none"/><rect x="57.10" y="5.40" width="7.60" height="8.10" rx="1.6" /><rect x="58.40" y="6.70" width="5.00" height="5.50" rx="0.6000000000000001" fill="#9b9b9b" stroke="none"/><rect x="4.20" y="15.30" width="10.30" height="10.80" rx="1.6" /><rect x="5.50" y="16.60" width="7.70" height="8.20" rx="0.6000000000000001" fill="#9b9b9b" stroke="none"/><rect x="5.50" y="26.10" width="9.00" height="11.30" rx="1.6" /><rect x="6.80" y="27.40" width="6.40" height="8.70" rx="0.6000000000000001" fill="#9b9b9b" stroke="none"/><rect x="3.30" y="37.40" width="11.20" height="10.80" rx="1.6" /><rect x="4.60" y="38.70" width="8.60" height="8.20" rx="0.6000000000000001" fill="#9b9b9b" stroke="none"/><rect x="6.20" y="48.20" width="8.30" height="7.70" rx="1.6" /><rect x="7.50" y="49.50" width="5.70" height="5.10" rx="0.6000000000000001" fill="#9b9b9b" stroke="none"/><rect x="5.50" y="56.10" width="9.00" height="7.60" rx="1.6" /><rect x="6.80" y="57.40" width="6.40" height="5.00" rx="0.6000000000000001" fill="#9b9b9b" stroke="none"/><rect x="0.80" y="0.80" width="15.00" height="15.00" rx="2.5" /><rect x="2.10" y="2.10" width="12.40" height="12.40" rx="1.5" fill="#9b9b9b" stroke="none"/></g><g transform="translate(540.300,301.600) scale(0.82422,0.82422)" shape-rendering="crispEdges"><rect x="11.5" y="11.5" width="53.0" height="53.0" fill="#343434"/><g shape-rendering="auto" stroke="#434343" stroke-width="0.9"><path d="M15.40 16.80h2.4M16.60 15.60v2.4"/><path d="M31.80 15.30h2.4M33.00 14.10v2.4"/><path d="M49.50 16.30h2.4M50.70 15.10v2.4"/><path d="M23.80 23.40h2.4M25.00 22.20v2.4"/><path d="M40.80 23.00h2.4M42.00 21.80v2.4"/><path d="M55.80 22.90h2.4M57.00 21.70v2.4"/><path d="M15.80 32.30h2.4M17.00 31.10v2.4"/><path d="M31.80 31.30h2.4M33.00 30.10v2.4"/><path d="M46.70 32.30h2.4M47.90 31.10v2.4"/><path d="M23.40 38.30h2.4M24.60 37.10v2.4"/><path d="M39.50 40.40h2.4M40.70 39.20v2.4"/><path d="M56.40 38.30h2.4M57.60 37.10v2.4"/><path d="M13.70 48.30h2.4M14.90 47.10v2.4"/><path d="M29.50 47.90h2.4M30.70 46.70v2.4"/><path d="M46.90 49.20h2.4M48.10 48.00v2.4"/><path d="M23.40 55.90h2.4M24.60 54.70v2.4"/><path d="M39.50 57.30h2.4M40.70 56.10v2.4"/><path d="M56.60 55.40h2.4M57.80 54.20v2.4"/></g></g><g transform="translate(540.300,301.600) scale(0.82422,0.82422)" fill="#8c8c8c" stroke="#252525"><rect x="16.30" y="2.20" width="10.80" height="11.30" rx="1.6" /><rect x="17.60" y="3.50" width="8.20" height="8.70" rx="0.6000000000000001" fill="#9b9b9b" stroke="none"/><rect x="27.10" y="4.60" width="11.30" height="8.90" rx="1.6" /><rect x="28.40" y="5.90" width="8.70" height="6.30" rx="0.6000000000000001" fill="#9b9b9b" stroke="none"/><rect x="38.40" y="3.00" width="10.80" height="10.50" rx="1.6" /><rect x="39.70" y="4.30" width="8.20" height="7.90" rx="0.6000000000000001" fill="#9b9b9b" stroke="none"/><rect x="49.20" y="4.60" width="7.70" height="8.90" rx="1.6" /><rect x="50.50" y="5.90" width="5.10" height="6.30" rx="0.6000000000000001" fill="#9b9b9b" stroke="none"/><rect x="57.10" y="5.40" width="7.60" height="8.10" rx="1.6" /><rect x="58.40" y="6.70" width="5.00" height="5.50" rx="0.6000000000000001" fill="#9b9b9b" stroke="none"/><rect x="4.20" y="15.30" width="10.30" height="10.80" rx="1.6" /><rect x="5.50" y="16.60" width="7.70" height="8.20" rx="0.6000000000000001" fill="#9b9b9b" stroke="none"/><rect x="5.50" y="26.10" width="9.00" height="11.30" rx="1.6" /><rect x="6.80" y="27.40" width="6.40" height="8.70" rx="0.6000000000000001" fill="#9b9b9b" stroke="none"/><rect x="3.30" y="37.40" width="11.20" height="10.80" rx="1.6" /><rect x="4.60" y="38.70" width="8.60" height="8.20" rx="0.6000000000000001" fill="#9b9b9b" stroke="none"/><rect x="6.20" y="48.20" width="8.30" height="7.70" rx="1.6" /><rect x="7.50" y="49.50" width="5.70" height="5.10" rx="0.6000000000000001" fill="#9b9b9b" stroke="none"/><rect x="5.50" y="56.10" width="9.00" height="7.60" rx="1.6" /><rect x="6.80" y="57.40" width="6.40" height="5.00" rx="0.6000000000000001" fill="#9b9b9b" stroke="none"/><rect x="0.80" y="0.80" width="15.00" height="15.00" rx="2.5" /><rect x="2.10" y="2.10" width="12.40" height="12.40" rx="1.5" fill="#9b9b9b" stroke="none"/><rect x="48.20" y="48.20" width="15.00" height="15.00" rx="2.5" /><rect x="49.50" y="49.50" width="12.40" height="12.40" rx="1.5" fill="#9b9b9b" stroke="none"/></g><g transform="translate(593.050,301.600) scale(0.82422,0.82422)" shape-rendering="crispEdges"><rect x="-0.5" y="11.5" width="53.0" height="41.0" fill="#343434"/><g shape-rendering="auto" stroke="#434343" stroke-width="0.9"><path d="M15.40 16.80h2.4M16.60 15.60v2.4"/><path d="M31.80 15.30h2.4M33.00 14.10v2.4"/><path d="M8.50 24.20h2.4M9.70 23.00v2.4"/><path d="M23.80 23.40h2.4M25.00 22.20v2.4"/><path d="M40.80 23.00h2.4M42.00 21.80v2.4"/><path d="M15.80 32.30h2.4M17.00 31.10v2.4"/><path d="M31.80 31.30h2.4M33.00 30.10v2.4"/><path d="M46.70 32.30h2.4M47.90 31.10v2.4"/><path d="M7.50 38.80h2.4M8.70 37.60v2.4"/><path d="M23.40 38.30h2.4M24.60 37.10v2.4"/><path d="M39.50 40.40h2.4M40.70 39.20v2.4"/><path d="M13.70 48.30h2.4M14.90 47.10v2.4"/><path d="M29.50 47.90h2.4M30.70 46.70v2.4"/><path d="M46.90 49.20h2.4M48.10 48.00v2.4"/></g></g><g transform="translate(593.050,301.600) scale(0.82422,0.82422)" fill="#8c8c8c" stroke="#252525"><rect x="0.30" y="4.60" width="8.20" height="8.90" rx="1.6" /><rect x="1.60" y="5.90" width="5.60" height="6.30" rx="0.6000000000000001" fill="#9b9b9b" stroke="none"/><rect x="8.40" y="5.80" width="7.60" height="7.70" rx="1.6" /><rect x="9.70" y="7.10" width="5.00" height="5.10" rx="0.6000000000000001" fill="#9b9b9b" stroke="none"/><rect x="16.30" y="2.20" width="10.80" height="11.30" rx="1.6" /><rect x="17.60" y="3.50" width="8.20" height="8.70" rx="0.6000000000000001" fill="#9b9b9b" stroke="none"/><rect x="27.10" y="4.60" width="11.30" height="8.90" rx="1.6" /><rect x="28.40" y="5.90" width="8.70" height="6.30" rx="0.6000000000000001" fill="#9b9b9b" stroke="none"/><rect x="38.40" y="3.00" width="10.80" height="10.50" rx="1.6" /><rect x="39.70" y="4.30" width="8.20" height="7.90" rx="0.6000000000000001" fill="#9b9b9b" stroke="none"/><rect x="0.30" y="50.50" width="8.20" height="8.90" rx="1.6" /><rect x="1.60" y="51.80" width="5.60" height="6.30" rx="0.6000000000000001" fill="#9b9b9b" stroke="none"/><rect x="8.40" y="50.50" width="7.60" height="7.70" rx="1.6" /><rect x="9.70" y="51.80" width="5.00" height="5.10" rx="0.6000000000000001" fill="#9b9b9b" stroke="none"/><rect x="16.30" y="50.50" width="10.80" height="11.30" rx="1.6" /><rect x="17.60" y="51.80" width="8.20" height="8.70" rx="0.6000000000000001" fill="#9b9b9b" stroke="none"/><rect x="27.10" y="50.50" width="11.30" height="8.90" rx="1.6" /><rect x="28.40" y="51.80" width="8.70" height="6.30" rx="0.6000000000000001" fill="#9b9b9b" stroke="none"/><rect x="38.40" y="50.50" width="10.80" height="10.50" rx="1.6" /><rect x="39.70" y="51.80" width="8.20" height="7.90" rx="0.6000000000000001" fill="#9b9b9b" stroke="none"/><rect x="50.50" y="16.30" width="11.30" height="10.80" rx="1.6" /><rect x="51.80" y="17.60" width="8.70" height="8.20" rx="0.6000000000000001" fill="#9b9b9b" stroke="none"/><rect x="50.50" y="27.10" width="8.90" height="11.30" rx="1.6" /><rect x="51.80" y="28.40" width="6.30" height="8.70" rx="0.6000000000000001" fill="#9b9b9b" stroke="none"/><rect x="50.50" y="38.40" width="10.50" height="10.80" rx="1.6" /><rect x="51.80" y="39.70" width="7.90" height="8.20" rx="0.6000000000000001" fill="#9b9b9b" stroke="none"/><rect x="48.20" y="48.20" width="15.00" height="15.00" rx="2.5" /><rect x="49.50" y="49.50" width="12.40" height="12.40" rx="1.5" fill="#9b9b9b" stroke="none"/><rect x="48.20" y="0.80" width="15.00" height="15.00" rx="2.5" /><rect x="49.50" y="2.10" width="12.40" height="12.40" rx="1.5" fill="#9b9b9b" stroke="none"/></g><g transform="translate(645.800,301.600) scale(0.82422,0.82422)" shape-rendering="crispEdges"><rect x="11.5" y="11.5" width="41.0" height="41.0" fill="#343434"/><g shape-rendering="auto" stroke="#434343" stroke-width="0.9"><path d="M15.40 16.80h2.4M16.60 15.60v2.4"/><path d="M31.80 15.30h2.4M33.00 14.10v2.4"/><path d="M23.80 23.40h2.4M25.00 22.20v2.4"/><path d="M40.80 23.00h2.4M42.00 21.80v2.4"/><path d="M15.80 32.30h2.4M17.00 31.10v2.4"/><path d="M31.80 31.30h2.4M33.00 30.10v2.4"/><path d="M46.70 32.30h2.4M47.90 31.10v2.4"/><path d="M23.40 38.30h2.4M24.60 37.10v2.4"/><path d="M39.50 40.40h2.4M40.70 39.20v2.4"/><path d="M13.70 48.30h2.4M14.90 47.10v2.4"/><path d="M29.50 47.90h2.4M30.70 46.70v2.4"/><path d="M46.90 49.20h2.4M48.10 48.00v2.4"/></g></g><g transform="translate(645.800,301.600) scale(0.82422,0.82422)" fill="#8c8c8c" stroke="#252525"><rect x="16.30" y="2.20" width="10.80" height="11.30" rx="1.6" /><rect x="17.60" y="3.50" width="8.20" height="8.70" rx="0.6000000000000001" fill="#9b9b9b" stroke="none"/><rect x="27.10" y="4.60" width="11.30" height="8.90" rx="1.6" /><rect x="28.40" y="5.90" width="8.70" height="6.30" rx="0.6000000000000001" fill="#9b9b9b" stroke="none"/><rect x="38.40" y="3.00" width="10.80" height="10.50" rx="1.6" /><rect x="39.70" y="4.30" width="8.20" height="7.90" rx="0.6000000000000001" fill="#9b9b9b" stroke="none"/><rect x="16.30" y="50.50" width="10.80" height="11.30" rx="1.6" /><rect x="17.60" y="51.80" width="8.20" height="8.70" rx="0.6000000000000001" fill="#9b9b9b" stroke="none"/><rect x="27.10" y="50.50" width="11.30" height="8.90" rx="1.6" /><rect x="28.40" y="51.80" width="8.70" height="6.30" rx="0.6000000000000001" fill="#9b9b9b" stroke="none"/><rect x="38.40" y="50.50" width="10.80" height="10.50" rx="1.6" /><rect x="39.70" y="51.80" width="8.20" height="7.90" rx="0.6000000000000001" fill="#9b9b9b" stroke="none"/><rect x="4.20" y="15.30" width="10.30" height="10.80" rx="1.6" /><rect x="5.50" y="16.60" width="7.70" height="8.20" rx="0.6000000000000001" fill="#9b9b9b" stroke="none"/><rect x="5.50" y="26.10" width="9.00" height="11.30" rx="1.6" /><rect x="6.80" y="27.40" width="6.40" height="8.70" rx="0.6000000000000001" fill="#9b9b9b" stroke="none"/><rect x="3.30" y="37.40" width="11.20" height="10.80" rx="1.6" /><rect x="4.60" y="38.70" width="8.60" height="8.20" rx="0.6000000000000001" fill="#9b9b9b" stroke="none"/><rect x="50.50" y="16.30" width="11.30" height="10.80" rx="1.6" /><rect x="51.80" y="17.60" width="8.70" height="8.20" rx="0.6000000000000001" fill="#9b9b9b" stroke="none"/><rect x="50.50" y="27.10" width="8.90" height="11.30" rx="1.6" /><rect x="51.80" y="28.40" width="6.30" height="8.70" rx="0.6000000000000001" fill="#9b9b9b" stroke="none"/><rect x="50.50" y="38.40" width="10.50" height="10.80" rx="1.6" /><rect x="51.80" y="39.70" width="7.90" height="8.20" rx="0.6000000000000001" fill="#9b9b9b" stroke="none"/><rect x="0.80" y="48.20" width="15.00" height="15.00" rx="2.5" /><rect x="2.10" y="49.50" width="12.40" height="12.40" rx="1.5" fill="#9b9b9b" stroke="none"/><rect x="0.80" y="0.80" width="15.00" height="15.00" rx="2.5" /><rect x="2.10" y="2.10" width="12.40" height="12.40" rx="1.5" fill="#9b9b9b" stroke="none"/><rect x="48.20" y="48.20" width="15.00" height="15.00" rx="2.5" /><rect x="49.50" y="49.50" width="12.40" height="12.40" rx="1.5" fill="#9b9b9b" stroke="none"/><rect x="48.20" y="0.80" width="15.00" height="15.00" rx="2.5" /><rect x="49.50" y="2.10" width="12.40" height="12.40" rx="1.5" fill="#9b9b9b" stroke="none"/></g></g>
<rect x="540.5" y="143.5" width="52" height="53" fill="none" stroke="#c8c8c8" stroke-width="1"/>
</g>
</svg>
</div>
<div class="a" style="left:425px;top:381px;width:446px;height:1px;background:#474747"></div>

<!-- brush inspector -->
<div class="dd" style="left:428px;top:383px;width:150px;height:18px"><div class="arr" style="left:136px;top:6px"></div></div>
<div class="t" style="left:432px;top:385px">Default Brush</div>

<div class="t dis" style="left:429px;top:407px">Script</div>
<div class="fld" style="left:580px;top:404px;width:288px;height:18px"></div><div class="a" style="left:849px;top:405px;width:18px;height:16px;background:#313131;border-radius:0 2px 2px 0"></div>
<svg class="a" style="left:0;top:0" width="871" height="495">
  <rect x="584.8" y="409.2" width="8.4" height="9.8" fill="#a3a3a3" rx="0.8"/>
  <path d="M590.6 409.2 L593.2 411.8 L590.6 411.8 Z" fill="#6f6f6f"/>
  <g stroke="#4c7a4c" stroke-width="0.9"><path d="M587.8 411.6 L587 417 M590.4 411.6 L589.6 417 M586.4 413.4 H591.2 M586 415.4 H590.8"/></g>
  <circle cx="858.2" cy="413" r="4.0" fill="none" stroke="#bdbdbd" stroke-width="0.9"/>
  <circle cx="858.2" cy="413" r="1.3" fill="#bdbdbd"/>
</svg>
<div class="t dis" style="left:596.7px;top:407px">GridBrush</div>

<div class="t" style="left:429px;top:427px">Flood Fill Contiguous Only</div>
<div class="fld" style="left:580px;top:426px;width:14px;height:14px"></div>
<div class="t" style="left:429px;top:447px">Lock Z Position</div>
<div class="fld" style="left:580px;top:446px;width:14px;height:14px"></div>
<svg class="a" style="left:0;top:0" width="871" height="495">
  <g stroke="#e2e2e2" stroke-width="1.5" fill="none" stroke-linecap="round" stroke-linejoin="round">
    <path d="M583.2 433.6 L586 436.3 L590.9 430.7"/>
    <path d="M583.2 453.6 L586 456.3 L590.9 450.7"/>
  </g>
</svg>

<div class="t dis" style="left:429px;top:467px">Z Position</div>
<div class="fld" style="left:580px;top:464px;width:147px;height:18px"></div>
<div class="t dis" style="left:583px;top:467px">0</div>
<div class="a" style="left:731px;top:465px;width:136px;height:17px;background:#464646;border-radius:3px"></div>
<div class="t dis" style="left:783px;top:467px">Reset</div>
<div class="a" style="left:423px;top:494px;width:448px;height:1px;background:#1b1b1b"></div>
</body></html>
